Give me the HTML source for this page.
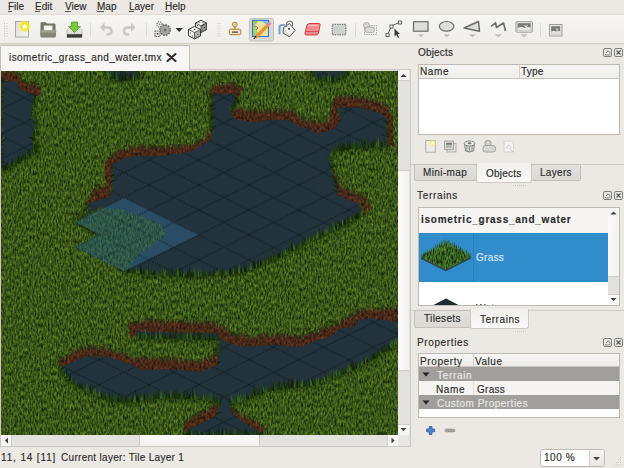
<!DOCTYPE html>
<html><head><meta charset="utf-8">
<style>
*{margin:0;padding:0;box-sizing:border-box}
html,body{width:624px;height:468px;overflow:hidden;background:#ece9e4;font-family:"Liberation Sans",sans-serif;font-size:10px;color:#2b2b2b}
.a{position:absolute}
.t{position:absolute;white-space:nowrap;line-height:10px;-webkit-text-stroke:0.15px currentColor}
.tab{position:absolute;background:linear-gradient(#e3e1dd,#dcd9d4);border:1px solid #c5c1ba;border-radius:2px}
.tsel{position:absolute;background:linear-gradient(#f1f0ed,#faf9f7);border:1px solid #cdc9c2;border-top:none;border-radius:0 0 3px 3px}
.tabs{position:absolute;background:#f5f4f2;border:1px solid #c2beb7;border-bottom:none;border-radius:2px 2px 0 0}
.grip{position:absolute;width:3px;background-image:radial-gradient(circle,#b9b5ae 0.7px,transparent 0.8px);background-size:2px 2px}
.sep{position:absolute;width:1px;height:14px;background:#d9d6d0;top:23px}
</style></head><body>
<!-- menu bar -->
<div class="t" style="left:8px;top:2px">File</div>
<div class="t" style="left:35px;top:2px">Edit</div>
<div class="t" style="left:65px;top:2px">View</div>
<div class="t" style="left:97px;top:2px">Map</div>
<div class="t" style="left:129px;top:2px">Layer</div>
<div class="t" style="left:165px;top:2px">Help</div>
<div class="a" style="left:8px;top:11px;width:4px;height:1px;background:#555"></div>
<div class="a" style="left:35px;top:11px;width:5px;height:1px;background:#555"></div>
<div class="a" style="left:65px;top:11px;width:6px;height:1px;background:#555"></div>
<div class="a" style="left:97px;top:11px;width:7px;height:1px;background:#555"></div>
<div class="a" style="left:129px;top:11px;width:5px;height:1px;background:#555"></div>
<div class="a" style="left:165px;top:11px;width:6px;height:1px;background:#555"></div>
<div class="a" style="left:0;top:14px;width:624px;height:1px;background:#dedbd6"></div>
<!-- toolbar -->
<div class="a" style="left:0;top:15px;width:624px;height:28px;background:linear-gradient(#f8f6f3,#efedea)"></div>
<div class="a" style="left:0;top:43px;width:624px;height:1px;background:#d2cec8"></div>
<div class="a" style="left:0;top:44px;width:624px;height:1px;background:#dfdcd6"></div>
<svg class="a" style="left:0;top:15px" width="624" height="28" viewBox="0 15 624 28">
<defs>
<radialGradient id="glow"><stop offset="0.55" stop-color="#f2e61e"/><stop offset="1" stop-color="#fff6a0" stop-opacity="0"/></radialGradient>
<linearGradient id="pg" x1="0" y1="0" x2="1" y2="1"><stop offset="0" stop-color="#dcdcd8"/><stop offset="1" stop-color="#f6f6f4"/></linearGradient>
<linearGradient id="drv" x1="0" y1="0" x2="0" y2="1"><stop offset="0" stop-color="#f2f2f0"/><stop offset="1" stop-color="#c9cac6"/></linearGradient>
<linearGradient id="fold" x1="0" y1="0" x2="0" y2="1"><stop offset="0" stop-color="#a6a795"/><stop offset="1" stop-color="#7a7b6b"/></linearGradient>
</defs>
<!-- grip -->
<g fill="#c4c0b9">
<rect x="4" y="23" width="1" height="1"/><rect x="6.5" y="23" width="1" height="1"/>
<rect x="4" y="25.5" width="1" height="1"/><rect x="6.5" y="25.5" width="1" height="1"/>
<rect x="4" y="28" width="1" height="1"/><rect x="6.5" y="28" width="1" height="1"/>
<rect x="4" y="30.5" width="1" height="1"/><rect x="6.5" y="30.5" width="1" height="1"/>
<rect x="4" y="33" width="1" height="1"/><rect x="6.5" y="33" width="1" height="1"/>
<rect x="4" y="35.5" width="1" height="1"/><rect x="6.5" y="35.5" width="1" height="1"/>
</g>
<!-- new -->
<rect x="15.5" y="21.5" width="13" height="15.5" fill="url(#pg)" stroke="#a8a8a4" stroke-width="1"/>
<circle cx="24.7" cy="26.3" r="6.8" fill="url(#glow)"/>
<path d="M24.7,23.3 L25.7,25.4 L27.9,25.6 L26.2,27.1 L26.8,29.3 L24.7,28.1 L22.6,29.3 L23.2,27.1 L21.5,25.6 L23.7,25.4 Z" fill="#fff"/>
<!-- open -->
<path d="M40.5,23.5 Q40.5,22.3 41.7,22.3 L46,22.3 L47,23.5 L54.5,23.5 Q55.5,23.5 55.5,24.5 L55.5,31 L40.5,31 Z" fill="#727466"/>
<rect x="43.8" y="25.3" width="9" height="5.5" fill="#f4f4f0" stroke="#8d8e80" stroke-width="0.6"/>
<path d="M40,30.3 L56.3,30.3 L55.8,36.4 Q55.7,37.4 54.7,37.4 L41.5,37.4 Q40.5,37.4 40.4,36.4 Z" fill="url(#fold)"/>
<path d="M40.3,33.8 L56,33.8" stroke="#6b6c5e" stroke-width="0.6"/>
<!-- save -->
<path d="M67,30 L69,27.5 L80,27.5 L82,30 L82,37.5 L67,37.5 Z" fill="url(#drv)" stroke="#9a9b97" stroke-width="0.6"/>
<rect x="67" y="34.2" width="15" height="3.3" fill="#3a3b3a"/>
<path d="M71.5,22 L77.5,22 L77.5,26.5 L80.5,26.5 L74.5,32.5 L68.5,26.5 L71.5,26.5 Z" fill="#74c93c" stroke="#4e9a24" stroke-width="0.7"/>
<!-- sep -->
<rect x="90" y="23" width="1" height="14" fill="#dcd9d3"/>
<!-- undo/redo disabled -->
<g fill="none" stroke="#c9c8c4" stroke-width="2.6" stroke-linecap="round">
<path d="M102.5,27.5 L108,27.5 Q111.5,27.5 111.5,31 Q111.5,34.5 107.5,34.5"/>
<path d="M133,27.5 L127.5,27.5 Q124,27.5 124,31 Q124,34.5 128,34.5"/>
</g>
<path d="M104.5,22.5 L100,27.5 L104.5,32 Z" fill="#c9c8c4"/>
<path d="M131,22.5 L135.5,27.5 L131,32 Z" fill="#c9c8c4"/>
<rect x="146" y="23" width="1" height="14" fill="#dcd9d3"/>
<!-- gears -->
<circle cx="165" cy="30" r="5.2" fill="#9c9c99" stroke="#6a6a67" stroke-width="1.6" stroke-dasharray="1.6,1.1"/>
<circle cx="165" cy="30" r="4" fill="#a7a7a4"/>
<circle cx="165" cy="30" r="1.5" fill="#6d6d6a"/>
<circle cx="159.5" cy="24.3" r="2.6" fill="#f0f0ee" stroke="#777774" stroke-width="1.3" stroke-dasharray="1.2,0.9"/>
<circle cx="159.5" cy="24.3" r="0.9" fill="#888"/>
<rect x="155" y="31" width="5" height="5.5" fill="#e6e6e4" stroke="#6a6a67" stroke-width="1.1" stroke-dasharray="1.5,0.7"/>
<rect x="156.8" y="33" width="1.5" height="1.6" fill="#444"/>
<path d="M175.5,28 L182.8,28 L179.2,32 Z" fill="#2e2e2e"/>
<!-- dice -->
<path d="M195.5,23 L201,20.2 L206.5,23 L206.5,29.5 L201,32.5 L195.5,29.5 Z" fill="#ececea" stroke="#2f2f2f" stroke-width="0.9" stroke-linejoin="round"/>
<path d="M201,26 L206.5,23 L206.5,29.5 L201,32.5 Z" fill="#8e8e8c" stroke="#2f2f2f" stroke-width="0.7"/>
<path d="M195.5,23 L201,26 L206.5,23" fill="none" stroke="#2f2f2f" stroke-width="0.7"/>
<path d="M188.5,29.5 L194.5,26.3 L200.5,29.5 L200.5,35.8 L194.5,38.8 L188.5,35.8 Z" fill="#f6f6f4" stroke="#2a2a2a" stroke-width="0.95" stroke-linejoin="round"/>
<path d="M194.5,32.6 L200.5,29.5 L200.5,35.8 L194.5,38.8 Z" fill="#b2b2b0" stroke="#2a2a2a" stroke-width="0.7"/>
<path d="M188.5,29.5 L194.5,32.6" fill="none" stroke="#2a2a2a" stroke-width="0.7"/>
<g fill="#2a2a2a"><ellipse cx="194.5" cy="29.5" rx="0.9" ry="0.6"/><circle cx="190.5" cy="33" r="0.55"/><circle cx="192.5" cy="36" r="0.55"/><circle cx="199.2" cy="22.3" r="0.55"/><circle cx="203" cy="22.6" r="0.55"/><circle cx="197.5" cy="25.6" r="0.55"/><circle cx="204.5" cy="27.5" r="0.5"/><circle cx="197.8" cy="34.5" r="0.5"/></g>
<!-- grip 2 -->
<g fill="#d0ccc5">
<rect x="217.5" y="23" width="1" height="1"/><rect x="219.5" y="23" width="1" height="1"/>
<rect x="217.5" y="25.5" width="1" height="1"/><rect x="219.5" y="25.5" width="1" height="1"/>
<rect x="217.5" y="28" width="1" height="1"/><rect x="219.5" y="28" width="1" height="1"/>
<rect x="217.5" y="30.5" width="1" height="1"/><rect x="219.5" y="30.5" width="1" height="1"/>
<rect x="217.5" y="33" width="1" height="1"/><rect x="219.5" y="33" width="1" height="1"/>
<rect x="217.5" y="35.5" width="1" height="1"/><rect x="219.5" y="35.5" width="1" height="1"/>
</g>
<!-- stamp -->
<circle cx="234.8" cy="24.5" r="2.4" fill="#e6cf9a" stroke="#a87b30" stroke-width="0.9"/>
<rect x="233.8" y="26.5" width="2" height="3" fill="#c89a48"/>
<rect x="229.3" y="29.2" width="11.5" height="5.5" rx="1.2" fill="#f1e6c6" stroke="#a87b30" stroke-width="1"/>
<rect x="232" y="31.5" width="6" height="1.2" fill="#3a3a3a"/>
<!-- terrain brush (selected) -->
<rect x="249.5" y="18.5" width="24" height="22.5" rx="2" fill="#dddad5" stroke="#c3bfb8" stroke-width="1"/>
<rect x="252.5" y="20.5" width="16" height="16" fill="#a6d36a" stroke="#2d7bd0" stroke-width="1.2"/>
<path d="M253,21 L263,21 L268,27 L268,36 L259,36 Z" fill="#f1e4a8" opacity="0.9"/>
<path d="M253,21 L258,21 L253,28 Z" fill="#9bc85a"/>
<path d="M262,21 L268,21 L268,26 Z" fill="#6fc4e8"/>
<path d="M255,26 L258,28 L256,30" stroke="#d04030" stroke-width="0.9" fill="none"/>
<path d="M255.5,37.5 L268.5,24.5" stroke="#e8962a" stroke-width="3.2"/>
<path d="M268,25 L270.5,22.5" stroke="#e08ab8" stroke-width="3.2"/>
<path d="M254,39 L256,36" stroke="#333" stroke-width="1.3"/>
<!-- bucket -->
<path d="M279.5,33.5 L279.5,27.5 Q279.5,25 282,25 L284,25" stroke="#7f9fd6" stroke-width="2.2" fill="none" stroke-linecap="round"/>
<path d="M283.5,27.5 L289.5,23.5 L295.2,30.5 L289.5,36.8 L283,33.2 Z" fill="#d9d9d7" stroke="#5f5f5d" stroke-width="1" stroke-linejoin="round"/>
<path d="M284.5,28.5 L289.5,25 L293.5,30.5 L289,35 Z" fill="#f2f2f0"/>
<path d="M286.3,27 Q286,21 290,21 Q293.5,21.3 292.3,26.5" stroke="#6e6e6c" stroke-width="1.1" fill="none"/>
<circle cx="289" cy="28.8" r="1.1" fill="#4a4a4a"/>
<!-- eraser -->
<path d="M307,25 Q308,23.5 310,23.5 L319,23.5 Q320.8,23.7 320,25.5 L318.5,33 Q318,35 316,35 L306.5,35 Q304.5,35 305,33 Z" fill="#ee8d8f" stroke="#e0393f" stroke-width="1"/>
<path d="M305.5,31.5 L318.5,31.5" stroke="#e0393f" stroke-width="0.8"/>
<path d="M308,25.5 L318,25.5" stroke="#f6c0c0" stroke-width="1.2"/>
<!-- rect select -->
<rect x="332.3" y="24.3" width="13.5" height="10.5" fill="#cdd2cb" stroke="#585858" stroke-width="0.9" stroke-dasharray="1.4,1"/>
<rect x="355" y="23" width="1" height="14" fill="#dcd9d3"/>
<!-- select objects -->
<rect x="364.5" y="25.5" width="12" height="9" fill="none" stroke="#9a9a96" stroke-width="0.9" stroke-dasharray="1.3,1"/>
<circle cx="366.5" cy="25.5" r="3" fill="#d6d6d2" stroke="#a4a4a0" stroke-width="0.8"/>
<rect x="365" y="27" width="9.5" height="5.5" rx="2.5" fill="#d9d9d5" stroke="#a4a4a0" stroke-width="0.8"/>
<!-- edit polygons -->
<path d="M387.5,35 L391.5,26 L399,22.5" stroke="#555" stroke-width="1" fill="none"/>
<rect x="386" y="33.5" width="3" height="3" fill="#fff" stroke="#555" stroke-width="0.9"/>
<rect x="390" y="25" width="3" height="3" fill="#fff" stroke="#555" stroke-width="0.9"/>
<rect x="398.5" y="21" width="3" height="3" fill="#fff" stroke="#555" stroke-width="0.9"/>
<path d="M394.5,28.5 L394.5,36.5 L396.3,34.8 L398,38 L399.3,37.3 L397.6,34.2 L400,34 Z" fill="#3a3a3a"/>
<!-- insert rect -->
<rect x="413.5" y="21.7" width="14.5" height="9.5" fill="#dededb" stroke="#6b6b69" stroke-width="1.2"/>
<!-- ellipse -->
<ellipse cx="446.6" cy="26.3" rx="7.3" ry="4.8" fill="#dededb" stroke="#6b6b69" stroke-width="1.2"/>
<!-- polygon -->
<path d="M464,28 L478.5,21.5 L479.5,31.2 Z" fill="#dededb" stroke="#6b6b69" stroke-width="1.5" stroke-linejoin="round"/>
<!-- polyline -->
<path d="M491,26.5 L495.5,22.8 L496.5,27.5 L503.5,23 L505.5,31" fill="none" stroke="#6b6b69" stroke-width="1.6" stroke-linejoin="round"/>
<!-- insert tile -->
<rect x="515.9" y="21.7" width="16.5" height="10.5" rx="1" fill="#e8e8e6" stroke="#9a9a97" stroke-width="1"/>
<rect x="517.5" y="23.2" width="13.2" height="7.5" fill="#7a7a78"/>
<path d="M517.5,28 Q522,26 525,28 Q528,26.5 530.7,27.5 L530.7,30.7 L517.5,30.7 Z" fill="#e6e6e4"/>
<path d="M526,25 L526,30 M524,25.3 L526,27 L528,25.3" stroke="#eee" stroke-width="0.8" fill="none"/>
<!-- dropdown arrows -->
<g fill="#c2c1bd">
<path d="M418,34.3 L424,34.3 L421,37.6 Z"/>
<path d="M443.5,34.3 L450,34.3 L446.75,37.6 Z"/>
<path d="M468.7,34.3 L476,34.3 L472.3,37.6 Z"/>
<path d="M494.6,34.3 L502,34.3 L498.3,37.6 Z"/>
<path d="M520.4,34.3 L527.6,34.3 L524,37.6 Z"/>
</g>
<rect x="540" y="23" width="1" height="14" fill="#dcd9d3"/>
<!-- image icon -->
<rect x="549.5" y="24.5" width="12.5" height="11.5" fill="#e8e8e6" stroke="#a09f9b" stroke-width="1"/>
<rect x="551.2" y="26.2" width="9" height="8" fill="#777775"/>
<path d="M551.2,31.5 Q554,30 556,31.5 Q558,30.5 560.2,31 L560.2,34.2 L551.2,34.2 Z" fill="#e0e0de"/>
<path d="M557,28 L557,33 M555.5,28.5 L557,30 L558.5,28.5" stroke="#ddd" stroke-width="0.7" fill="none"/>
</svg>

<!-- tab bar -->
<div class="tabs" style="left:0;top:45px;width:190px;height:25px;background:#f7f6f4"></div>
<div class="t" style="left:9px;top:53px;letter-spacing:0.42px">isometric_grass_and_water.tmx</div>
<svg class="a" style="left:166px;top:53px" width="11" height="9" viewBox="0 0 11 9"><path d="M1.5,1 L9.5,8 M9.5,1 L1.5,8" stroke="#2a2a2a" stroke-width="2" stroke-linecap="round"/></svg>
<!-- map frame -->
<div class="a" style="left:0;top:69px;width:411px;height:378px;border:1px solid #cdc9c2;background:#e3e1dd"></div>
<div class="a" style="left:1px;top:69px;width:188px;height:2px;background:#f7f6f4"></div>
<svg class="a" style="left:1px;top:71px" width="397" height="364" viewBox="1 71 397 364">
<defs>
<filter id="gr" x="0" y="0" width="100%" height="100%" color-interpolation-filters="sRGB">
<feTurbulence type="fractalNoise" baseFrequency="0.6 0.25" numOctaves="3" seed="5" result="n"/>
<feColorMatrix in="n" type="matrix" values="0.45 0 0 0 0.004  0.6 0 0 0 0.037  0.17 0 0 0 0.012  0 0 0 0 1"/>
</filter>
<filter id="di" x="0" y="0" width="100%" height="100%" color-interpolation-filters="sRGB">
<feTurbulence type="fractalNoise" baseFrequency="0.5 0.3" numOctaves="2" seed="11" result="n"/>
<feColorMatrix in="n" type="matrix" values="0.42 0 0 0 0.072  0.24 0 0 0 0.037  0.12 0 0 0 0.034  0 0 0 0 1" result="c"/>
<feComposite in="c" in2="SourceAlpha" operator="in"/>
</filter>
<filter id="wa" x="0" y="0" width="100%" height="100%" color-interpolation-filters="sRGB">
<feTurbulence type="fractalNoise" baseFrequency="0.25" numOctaves="2" seed="2" result="n"/>
<feColorMatrix in="n" type="matrix" values="0.12 0 0 0 0.06  0.14 0 0 0 0.105  0.16 0 0 0 0.135  0 0 0 0 1" result="c"/>
<feComposite in="c" in2="SourceAlpha" operator="in"/>
</filter>
<filter id="jag" x="-5%" y="-5%" width="110%" height="110%">
<feTurbulence type="fractalNoise" baseFrequency="0.7 0.04" numOctaves="2" seed="9" result="t"/>
<feDisplacementMap in="SourceGraphic" in2="t" scale="11" xChannelSelector="B" yChannelSelector="R"/>
</filter>
<mask id="land" maskUnits="userSpaceOnUse" x="1" y="71" width="397" height="364"><rect x="1" y="71" width="397" height="364" fill="#fff"/><g fill="#000" filter="url(#jag)"><g stroke="#000" stroke-width="4" stroke-linejoin="round"><polygon points="1,71 12,71 18,74 21,81 26,83 36,84 39,88 38.5,94 35,94 22.5,91 15,81 1,81"/><polygon points="107,192 107,160 120,150 140,146 156,147.5 191,145 206,137.5 212,128 212,140 188.5,152.5 156,156 137.5,156 125,157.5 112.5,165 112,192"/><polygon points="210,88 220,84 235,84 241,88 238,95 212,95"/><polygon points="231,107.5 256,111 291,110 301,117.5 312,122.5 329.5,120 332,105 337,96 362,97.5 384.5,104 392,115 392,145 387,145 387,120 382,114 359.5,107.5 338,107.5 340.75,120 334.5,129 317,134 312,130 298.5,126 288.5,120 268.5,120 256,122.5 238.5,120 232,117"/><polygon points="85,204 95,190 110,183 112,191 109,197 88,203.6"/><polygon points="332,170 337,180 342,187 364.5,197 369.5,207 362,214.5 359.5,204.5 337,194.5 337,187"/><polygon points="131,324 146,320 211,323 221,326.5 233.5,335 253.5,336.5 277,334 292,335 300,337.5 332,326 348,316.6 364,309.4 398,308.6 398,322.4 386.5,320 372,318.4 359.3,319.2 354.5,326.4 338.5,329 332,336 312.8,341.7 300,347 279.5,345 241,346.5 223.5,341.5 216,333 183.5,333 137,331.5 131,336"/><polygon points="60,361.5 72.5,351.5 87.5,346.5 105,348 121,354 136,357 171,359 203.5,361 218.5,352 218.5,364 203.5,371.5 171,369.5 141,370 130,364 107.5,356.5 85,356.5 62.5,366.5"/><polygon points="185,422 200,413 214,406 220,403 217.6,415 208,420.6 189.4,428.5 186,431"/><polygon points="231,408 240,414 252,420 263,426 264,434 262,433 251,427.6 244,422.3 231,412.6"/></g><polygon points="1,81 15,81 22.5,91 35,94 33,105 31,114 36,125 32.5,140 37.5,150 20,160 7.5,167.5 1,170"/><polygon points="105,71 140,71 140,73 135,79 118,79 110,76"/><polygon points="312,71 347,71 345,76 335,80 320,80 314,76"/><polygon points="212,94 236,94 236,102 230,110 232,117 238.5,120 256,122.5 268.5,120 288.5,120 298.5,126 312,130 317,134 334.5,129 340.75,120 338,107.5 359.5,107.5 382,114 387,120 387,145 352,147.5 334.5,150 329.5,157.5 332,170 337,187 337,194.5 359.5,204.5 362,214.5 342,224.5 317,237 292,249.5 267,262 242,272 211,274.5 186,276 148.5,273 123.5,270.5 99,235 76,221 88,211.7 88,203.6 109,197 112,191 112.5,165 125,157.5 137.5,156 156,156 188.5,152.5 211,140 212,130"/><polygon points="137,331.5 183.5,333 216,333 223.5,341.5 241,346.5 279.5,345 300,347 312.8,341.7 332,336 338.5,329 354.5,326.4 359.3,319.2 372,318.4 386.5,320 398,322.4 398,341.5 367,361.5 342,373 317,384 292,386.5 267,390 256,394 243.5,400 230,402 231,412.6 244,422.3 251,427.6 262,433 264,436 187,436 189.4,428.5 208,420.6 217.6,415 220,403 213.5,400 183.5,396.5 146,398 130,401.5 110,400 95,394 75,384 62.5,372.75 62.5,366.5 85,356.5 107.5,356.5 130,364 141,370 171,369.5 203.5,371.5 218.5,364 218.5,339 190,338 150,337 137,338"/></g></mask>
<filter id="bl" x="-10%" y="-10%" width="120%" height="120%"><feGaussianBlur stdDeviation="1.6"/></filter>
<pattern id="grid" x="99.04" y="197.5" width="49.92" height="24.96" patternUnits="userSpaceOnUse">
<path d="M0,12.48 L24.96,0 L49.92,12.48 L24.96,24.96 Z" fill="none" stroke="#0a0f13" stroke-width="1" stroke-dasharray="1.2,1.4"/>
</pattern>
</defs>
<rect x="1" y="71" width="397" height="364" fill="#3c641e" filter="url(#gr)"/>
<g fill="#4a2a18" stroke="#4a2a18" stroke-width="4" stroke-linejoin="round" filter="url(#di)"><polygon points="1,71 12,71 18,74 21,81 26,83 36,84 39,88 38.5,94 35,94 22.5,91 15,81 1,81"/><polygon points="107,192 107,160 120,150 140,146 156,147.5 191,145 206,137.5 212,128 212,140 188.5,152.5 156,156 137.5,156 125,157.5 112.5,165 112,192"/><polygon points="210,88 220,84 235,84 241,88 238,95 212,95"/><polygon points="231,107.5 256,111 291,110 301,117.5 312,122.5 329.5,120 332,105 337,96 362,97.5 384.5,104 392,115 392,145 387,145 387,120 382,114 359.5,107.5 338,107.5 340.75,120 334.5,129 317,134 312,130 298.5,126 288.5,120 268.5,120 256,122.5 238.5,120 232,117"/><polygon points="85,204 95,190 110,183 112,191 109,197 88,203.6"/><polygon points="332,170 337,180 342,187 364.5,197 369.5,207 362,214.5 359.5,204.5 337,194.5 337,187"/><polygon points="131,324 146,320 211,323 221,326.5 233.5,335 253.5,336.5 277,334 292,335 300,337.5 332,326 348,316.6 364,309.4 398,308.6 398,322.4 386.5,320 372,318.4 359.3,319.2 354.5,326.4 338.5,329 332,336 312.8,341.7 300,347 279.5,345 241,346.5 223.5,341.5 216,333 183.5,333 137,331.5 131,336"/><polygon points="60,361.5 72.5,351.5 87.5,346.5 105,348 121,354 136,357 171,359 203.5,361 218.5,352 218.5,364 203.5,371.5 171,369.5 141,370 130,364 107.5,356.5 85,356.5 62.5,366.5"/><polygon points="185,422 200,413 214,406 220,403 217.6,415 208,420.6 189.4,428.5 186,431"/><polygon points="231,408 240,414 252,420 263,426 264,434 262,433 251,427.6 244,422.3 231,412.6"/></g>
<g fill="#22333d"><polygon points="1,81 15,81 22.5,91 35,94 33,105 31,114 36,125 32.5,140 37.5,150 20,160 7.5,167.5 1,170"/><polygon points="105,71 140,71 140,73 135,79 118,79 110,76"/><polygon points="312,71 347,71 345,76 335,80 320,80 314,76"/><polygon points="212,94 236,94 236,102 230,110 232,117 238.5,120 256,122.5 268.5,120 288.5,120 298.5,126 312,130 317,134 334.5,129 340.75,120 338,107.5 359.5,107.5 382,114 387,120 387,145 352,147.5 334.5,150 329.5,157.5 332,170 337,187 337,194.5 359.5,204.5 362,214.5 342,224.5 317,237 292,249.5 267,262 242,272 211,274.5 186,276 148.5,273 123.5,270.5 99,235 76,221 88,211.7 88,203.6 109,197 112,191 112.5,165 125,157.5 137.5,156 156,156 188.5,152.5 211,140 212,130"/><polygon points="137,331.5 183.5,333 216,333 223.5,341.5 241,346.5 279.5,345 300,347 312.8,341.7 332,336 338.5,329 354.5,326.4 359.3,319.2 372,318.4 386.5,320 398,322.4 398,341.5 367,361.5 342,373 317,384 292,386.5 267,390 256,394 243.5,400 230,402 231,412.6 244,422.3 251,427.6 262,433 264,436 187,436 189.4,428.5 208,420.6 217.6,415 220,403 213.5,400 183.5,396.5 146,398 130,401.5 110,400 95,394 75,384 62.5,372.75 62.5,366.5 85,356.5 107.5,356.5 130,364 141,370 171,369.5 203.5,371.5 218.5,364 218.5,339 190,338 150,337 137,338"/></g>
<g fill="url(#grid)"><polygon points="1,81 15,81 22.5,91 35,94 33,105 31,114 36,125 32.5,140 37.5,150 20,160 7.5,167.5 1,170"/><polygon points="105,71 140,71 140,73 135,79 118,79 110,76"/><polygon points="312,71 347,71 345,76 335,80 320,80 314,76"/><polygon points="212,94 236,94 236,102 230,110 232,117 238.5,120 256,122.5 268.5,120 288.5,120 298.5,126 312,130 317,134 334.5,129 340.75,120 338,107.5 359.5,107.5 382,114 387,120 387,145 352,147.5 334.5,150 329.5,157.5 332,170 337,187 337,194.5 359.5,204.5 362,214.5 342,224.5 317,237 292,249.5 267,262 242,272 211,274.5 186,276 148.5,273 123.5,270.5 99,235 76,221 88,211.7 88,203.6 109,197 112,191 112.5,165 125,157.5 137.5,156 156,156 188.5,152.5 211,140 212,130"/><polygon points="137,331.5 183.5,333 216,333 223.5,341.5 241,346.5 279.5,345 300,347 312.8,341.7 332,336 338.5,329 354.5,326.4 359.3,319.2 372,318.4 386.5,320 398,322.4 398,341.5 367,361.5 342,373 317,384 292,386.5 267,390 256,394 243.5,400 230,402 231,412.6 244,422.3 251,427.6 262,433 264,436 187,436 189.4,428.5 208,420.6 217.6,415 220,403 213.5,400 183.5,396.5 146,398 130,401.5 110,400 95,394 75,384 62.5,372.75 62.5,366.5 85,356.5 107.5,356.5 130,364 141,370 171,369.5 203.5,371.5 218.5,364 218.5,339 190,338 150,337 137,338"/></g>
<rect x="1" y="71" width="397" height="364" fill="#3c641e" filter="url(#gr)" mask="url(#land)"/>
<g mask="url(#land)"><g fill="none" stroke="#10200a" stroke-width="6" stroke-opacity="0.55" filter="url(#bl)"><polygon points="1,81 15,81 22.5,91 35,94 33,105 31,114 36,125 32.5,140 37.5,150 20,160 7.5,167.5 1,170"/><polygon points="105,71 140,71 140,73 135,79 118,79 110,76"/><polygon points="312,71 347,71 345,76 335,80 320,80 314,76"/><polygon points="212,94 236,94 236,102 230,110 232,117 238.5,120 256,122.5 268.5,120 288.5,120 298.5,126 312,130 317,134 334.5,129 340.75,120 338,107.5 359.5,107.5 382,114 387,120 387,145 352,147.5 334.5,150 329.5,157.5 332,170 337,187 337,194.5 359.5,204.5 362,214.5 342,224.5 317,237 292,249.5 267,262 242,272 211,274.5 186,276 148.5,273 123.5,270.5 99,235 76,221 88,211.7 88,203.6 109,197 112,191 112.5,165 125,157.5 137.5,156 156,156 188.5,152.5 211,140 212,130"/><polygon points="137,331.5 183.5,333 216,333 223.5,341.5 241,346.5 279.5,345 300,347 312.8,341.7 332,336 338.5,329 354.5,326.4 359.3,319.2 372,318.4 386.5,320 398,322.4 398,341.5 367,361.5 342,373 317,384 292,386.5 267,390 256,394 243.5,400 230,402 231,412.6 244,422.3 251,427.6 262,433 264,436 187,436 189.4,428.5 208,420.6 217.6,415 220,403 213.5,400 183.5,396.5 146,398 130,401.5 110,400 95,394 75,384 62.5,372.75 62.5,366.5 85,356.5 107.5,356.5 130,364 141,370 171,369.5 203.5,371.5 218.5,364 218.5,339 190,338 150,337 137,338"/></g></g>
<g><path d="M36.2,94.8L31.3,92.5L36.2,96.0Z" fill="#10200a"/><path d="M35.8,96.6L31.6,94.0L35.8,98.8Z" fill="#10200a"/><path d="M35.6,97.9L29.6,94.4L35.6,99.3Z" fill="#2a4c1c"/><path d="M35.1,100.7L30.2,96.0L35.1,102.4Z" fill="#15290c"/><path d="M34.6,103.5L30.1,98.5L34.6,105.1Z" fill="#1c3612"/><path d="M34.4,104.4L29.3,101.9L34.4,106.1Z" fill="#1c3612"/><path d="M33.6,108.0L27.8,103.2L33.6,110.1Z" fill="#22401a"/><path d="M33.4,108.9L27.4,104.1L33.4,110.5Z" fill="#1c3612"/><path d="M32.7,112.0L28.6,110.1L32.7,114.1Z" fill="#1c3612"/><path d="M33.4,115.1L26.9,112.6L33.4,117.3Z" fill="#22401a"/><path d="M34.0,116.8L29.2,114.8L34.0,118.4Z" fill="#1c3612"/><path d="M35.1,118.9L31.2,115.4L35.1,121.0Z" fill="#2a4c1c"/><path d="M36.1,121.5L31.2,116.2L36.1,122.9Z" fill="#2a4c1c"/><path d="M36.6,122.5L30.5,121.1L36.6,124.1Z" fill="#10200a"/><path d="M37.1,125.9L32.9,121.1L37.1,127.6Z" fill="#2a4c1c"/><path d="M36.5,128.2L30.4,125.4L36.5,129.8Z" fill="#22401a"/><path d="M36.4,128.9L30.0,125.4L36.4,130.3Z" fill="#2a4c1c"/><path d="M35.7,131.4L30.6,126.4L35.7,133.3Z" fill="#15290c"/><path d="M35.2,134.0L31.2,132.2L35.2,135.3Z" fill="#15290c"/><path d="M34.6,136.6L30.5,133.9L34.6,138.3Z" fill="#22401a"/><path d="M34.2,137.8L27.4,136.9L34.2,140.2Z" fill="#10200a"/><path d="M34.5,140.4L30.1,136.8L34.5,142.3Z" fill="#10200a"/><path d="M35.1,141.9L31.5,137.7L35.1,143.3Z" fill="#1c3612"/><path d="M36.8,144.9L31.6,143.5L36.8,147.0Z" fill="#1c3612"/><path d="M37.7,146.8L33.5,144.2L37.7,148.6Z" fill="#15290c"/><path d="M38.4,148.0L33.1,147.1L38.4,150.1Z" fill="#1c3612"/><path d="M35.8,151.8L38.4,147.0L38.0,151.8Z" fill="#3a6420"/><path d="M34.5,152.4L37.3,147.9L37.5,152.4Z" fill="#10200a"/><path d="M32.7,153.3L34.4,144.3L35.9,153.3Z" fill="#15290c"/><path d="M32.6,153.6L33.1,146.6L35.1,153.6Z" fill="#3a6420"/><path d="M30.6,154.6L32.9,144.6L33.7,154.6Z" fill="#1a3310"/><path d="M29.8,155.0L31.9,149.0L33.0,155.0Z" fill="#22401a"/><path d="M28.5,156.1L28.1,149.3L30.4,156.1Z" fill="#10200a"/><path d="M27.7,156.6L27.4,151.1L29.6,156.6Z" fill="#1a3310"/><path d="M27.3,156.9L27.6,152.4L28.9,156.9Z" fill="#2a4c1c"/><path d="M25.8,157.7L25.6,149.5L27.7,157.7Z" fill="#2a4c1c"/><path d="M24.0,158.6L24.9,153.0L26.3,158.6Z" fill="#10200a"/><path d="M23.4,158.9L24.5,152.2L25.7,158.9Z" fill="#1a3310"/><path d="M22.1,159.5L22.1,151.5L24.8,159.5Z" fill="#1a3310"/><path d="M20.9,160.4L21.0,151.1L22.9,160.4Z" fill="#22401a"/><path d="M19.8,160.9L22.1,155.7L22.2,160.9Z" fill="#10200a"/><path d="M18.3,161.8L18.1,152.6L20.7,161.8Z" fill="#2a4c1c"/><path d="M16.4,162.8L19.0,152.9L19.5,162.8Z" fill="#15290c"/><path d="M15.8,163.1L18.5,156.2L18.8,163.1Z" fill="#15290c"/><path d="M15.1,163.8L17.0,153.8L17.2,163.8Z" fill="#22401a"/><path d="M13.7,164.4L16.0,156.2L16.5,164.4Z" fill="#1a3310"/><path d="M12.5,165.4L14.9,160.4L14.5,165.4Z" fill="#2a4c1c"/><path d="M11.3,166.1L11.0,161.7L13.4,166.1Z" fill="#22401a"/><path d="M10.5,166.6L12.9,157.4L12.4,166.6Z" fill="#10200a"/><path d="M9.1,167.5L11.0,163.1L10.8,167.5Z" fill="#22401a"/><path d="M8.6,167.7L9.9,158.3L10.6,167.7Z" fill="#2a4c1c"/><path d="M7.3,168.4L8.0,160.4L9.8,168.4Z" fill="#1c3612"/><path d="M6.2,169.1L6.9,160.1L8.2,169.1Z" fill="#1a3310"/><path d="M3.8,169.8L6.7,162.5L6.9,169.8Z" fill="#10200a"/><path d="M2.7,170.2L3.0,159.4L5.9,170.2Z" fill="#15290c"/><path d="M1.9,170.8L1.6,165.6L4.0,170.8Z" fill="#15290c"/><path d="M0.4,171.2L2.4,165.9L3.3,171.2Z" fill="#2a4c1c"/><path d="M-0.5,166.7L5.4,163.1L-0.5,168.9Z" fill="#2a4c1c"/><path d="M-0.5,166.1L6.8,164.6L-0.5,168.1Z" fill="#10200a"/><path d="M-0.5,162.5L4.0,160.4L-0.5,164.6Z" fill="#15290c"/><path d="M-0.5,161.0L5.7,158.7L-0.5,162.5Z" fill="#22401a"/><path d="M-0.5,159.4L3.7,156.0L-0.5,161.7Z" fill="#1c3612"/><path d="M-0.5,158.0L4.0,152.9L-0.5,159.6Z" fill="#15290c"/><path d="M-0.5,154.1L5.0,153.0L-0.5,155.9Z" fill="#10200a"/><path d="M-0.5,151.3L4.0,150.2L-0.5,153.3Z" fill="#1c3612"/><path d="M-0.5,150.2L3.9,147.7L-0.5,151.6Z" fill="#10200a"/><path d="M-0.5,147.2L4.4,145.6L-0.5,148.7Z" fill="#2a4c1c"/><path d="M-0.5,144.9L5.7,143.2L-0.5,146.6Z" fill="#15290c"/><path d="M-0.5,142.4L6.3,138.1L-0.5,144.8Z" fill="#10200a"/><path d="M-0.5,141.7L6.2,139.3L-0.5,144.1Z" fill="#15290c"/><path d="M-0.5,139.4L3.9,135.0L-0.5,141.6Z" fill="#22401a"/><path d="M-0.5,137.3L5.1,135.1L-0.5,139.4Z" fill="#15290c"/><path d="M-0.5,135.1L4.9,133.0L-0.5,137.1Z" fill="#10200a"/><path d="M-0.5,131.5L5.7,128.6L-0.5,133.0Z" fill="#2a4c1c"/><path d="M-0.5,130.8L6.6,128.4L-0.5,132.1Z" fill="#2a4c1c"/><path d="M-0.5,127.0L3.9,124.1L-0.5,128.6Z" fill="#1c3612"/><path d="M-0.5,125.6L3.9,121.2L-0.5,127.9Z" fill="#15290c"/><path d="M-0.5,123.9L3.5,119.2L-0.5,126.0Z" fill="#2a4c1c"/><path d="M-0.5,120.6L6.1,119.0L-0.5,122.9Z" fill="#22401a"/><path d="M-0.5,119.9L4.7,117.6L-0.5,121.9Z" fill="#10200a"/><path d="M-0.5,116.4L4.6,113.6L-0.5,118.0Z" fill="#22401a"/><path d="M-0.5,114.1L4.2,110.4L-0.5,116.0Z" fill="#22401a"/><path d="M-0.5,111.7L5.7,109.7L-0.5,114.0Z" fill="#2a4c1c"/><path d="M-0.5,109.5L4.2,105.2L-0.5,111.1Z" fill="#2a4c1c"/><path d="M-0.5,107.6L5.0,105.6L-0.5,109.3Z" fill="#22401a"/><path d="M-0.5,104.8L6.1,101.3L-0.5,107.1Z" fill="#1c3612"/><path d="M-0.5,103.3L4.7,99.1L-0.5,105.3Z" fill="#15290c"/><path d="M-0.5,101.0L4.2,99.7L-0.5,102.5Z" fill="#15290c"/><path d="M-0.5,97.9L6.2,95.0L-0.5,99.8Z" fill="#2a4c1c"/><path d="M-0.5,97.3L5.2,95.4L-0.5,99.4Z" fill="#10200a"/><path d="M-0.5,93.5L6.6,89.5L-0.5,95.7Z" fill="#15290c"/><path d="M-0.5,92.8L5.3,91.8L-0.5,95.1Z" fill="#15290c"/><path d="M-0.5,89.4L4.0,86.2L-0.5,90.8Z" fill="#2a4c1c"/><path d="M-0.5,86.7L6.8,82.1L-0.5,88.7Z" fill="#2a4c1c"/><path d="M-0.5,84.7L5.0,80.2L-0.5,87.0Z" fill="#22401a"/><path d="M-0.5,82.4L5.2,80.4L-0.5,84.5Z" fill="#15290c"/><path d="M-0.5,80.6L6.2,77.4L-0.5,82.1Z" fill="#15290c"/><path d="M138.7,74.8L139.1,71.0L140.8,74.8Z" fill="#1c3612"/><path d="M137.5,76.4L138.1,72.6L139.3,76.4Z" fill="#15290c"/><path d="M136.6,77.2L137.9,73.5L138.9,77.2Z" fill="#22401a"/><path d="M136.3,77.6L138.3,70.4L138.6,77.6Z" fill="#1a3310"/><path d="M135.4,78.5L136.6,71.2L137.9,78.5Z" fill="#1c3612"/><path d="M134.1,79.8L136.6,74.6L137.1,79.8Z" fill="#2a4c1c"/><path d="M132.7,80.5L133.2,72.2L135.3,80.5Z" fill="#15290c"/><path d="M132.2,80.5L133.8,72.6L134.4,80.5Z" fill="#3a6420"/><path d="M130.7,80.5L130.7,74.8L133.0,80.5Z" fill="#2a4c1c"/><path d="M129.1,80.5L130.9,69.7L131.7,80.5Z" fill="#10200a"/><path d="M127.8,80.5L127.6,75.1L130.1,80.5Z" fill="#22401a"/><path d="M127.0,80.5L129.2,72.8L129.1,80.5Z" fill="#1c3612"/><path d="M125.2,80.5L124.9,70.2L127.2,80.5Z" fill="#10200a"/><path d="M123.3,80.5L124.0,75.6L126.4,80.5Z" fill="#10200a"/><path d="M122.1,80.5L124.9,71.4L124.9,80.5Z" fill="#15290c"/><path d="M121.1,80.5L122.1,71.7L123.1,80.5Z" fill="#10200a"/><path d="M119.8,80.5L122.0,74.5L122.5,80.5Z" fill="#15290c"/><path d="M118.4,80.5L120.7,69.3L121.2,80.5Z" fill="#15290c"/><path d="M117.2,80.5L117.5,75.2L118.9,80.5Z" fill="#1a3310"/><path d="M115.2,80.0L115.9,73.3L118.3,80.0Z" fill="#2a4c1c"/><path d="M114.9,79.7L116.6,71.2L116.6,79.7Z" fill="#3a6420"/><path d="M113.0,79.2L114.6,69.6L115.9,79.2Z" fill="#10200a"/><path d="M112.4,78.8L113.6,71.7L114.6,78.8Z" fill="#1c3612"/><path d="M111.5,78.5L112.5,71.4L113.8,78.5Z" fill="#1c3612"/><path d="M109.1,77.7L110.3,67.9L111.9,77.7Z" fill="#1a3310"/><path d="M108.2,77.0L110.7,70.1L110.8,77.0Z" fill="#3a6420"/><path d="M107.1,76.0L107.8,70.2L109.9,76.0Z" fill="#3a6420"/><path d="M106.7,75.3L107.6,67.0L108.8,75.3Z" fill="#3a6420"/><path d="M105.4,74.0L105.1,67.4L107.6,74.0Z" fill="#3a6420"/><path d="M104.6,73.2L105.0,67.1L106.8,73.2Z" fill="#1c3612"/><path d="M345.5,73.6L345.1,69.2L347.6,73.6Z" fill="#15290c"/><path d="M345.3,73.9L347.2,69.4L347.6,73.9Z" fill="#1a3310"/><path d="M344.6,75.6L344.3,71.1L346.9,75.6Z" fill="#1c3612"/><path d="M344.3,76.5L345.6,72.1L346.4,76.5Z" fill="#22401a"/><path d="M342.7,77.8L344.5,71.3L345.9,77.8Z" fill="#1c3612"/><path d="M341.9,78.4L341.7,72.3L343.9,78.4Z" fill="#15290c"/><path d="M340.5,78.7L342.7,69.5L343.7,78.7Z" fill="#15290c"/><path d="M339.6,79.1L342.4,71.7L342.4,79.1Z" fill="#2a4c1c"/><path d="M337.8,79.8L338.6,69.1L340.7,79.8Z" fill="#1c3612"/><path d="M337.3,80.1L337.8,75.7L339.8,80.1Z" fill="#10200a"/><path d="M335.9,80.8L337.9,72.0L337.7,80.8Z" fill="#22401a"/><path d="M335.1,81.1L336.1,76.7L337.1,81.1Z" fill="#1c3612"/><path d="M333.2,81.5L334.7,76.6L336.3,81.5Z" fill="#3a6420"/><path d="M332.3,81.5L334.1,73.6L334.8,81.5Z" fill="#15290c"/><path d="M331.0,81.5L333.6,73.1L333.1,81.5Z" fill="#10200a"/><path d="M328.9,81.5L330.5,74.1L331.4,81.5Z" fill="#3a6420"/><path d="M327.7,81.5L329.9,73.8L330.0,81.5Z" fill="#22401a"/><path d="M326.5,81.5L328.5,72.7L329.1,81.5Z" fill="#3a6420"/><path d="M325.2,81.5L325.5,75.5L327.9,81.5Z" fill="#15290c"/><path d="M323.6,81.5L325.3,75.9L325.8,81.5Z" fill="#22401a"/><path d="M322.3,81.5L324.3,75.4L325.1,81.5Z" fill="#22401a"/><path d="M321.6,81.5L323.5,75.4L323.6,81.5Z" fill="#2a4c1c"/><path d="M319.3,81.5L320.6,70.5L321.6,81.5Z" fill="#1a3310"/><path d="M318.9,81.4L318.5,75.8L320.7,81.4Z" fill="#3a6420"/><path d="M317.2,80.5L317.8,72.1L319.7,80.5Z" fill="#10200a"/><path d="M315.9,79.5L316.4,73.8L318.2,79.5Z" fill="#2a4c1c"/><path d="M315.0,78.7L315.6,74.2L316.6,78.7Z" fill="#1c3612"/><path d="M313.5,77.8L315.0,73.7L315.5,77.8Z" fill="#3a6420"/><path d="M312.1,76.8L314.2,71.7L315.3,76.8Z" fill="#1c3612"/><path d="M312.3,75.5L313.3,70.9L314.2,75.5Z" fill="#22401a"/><path d="M311.3,73.9L312.9,70.8L313.8,73.9Z" fill="#22401a"/><path d="M310.9,72.5L311.5,68.7L313.1,72.5Z" fill="#10200a"/><path d="M237.5,95.5L231.1,93.1L237.5,97.1Z" fill="#22401a"/><path d="M237.5,97.9L231.9,95.6L237.5,99.8Z" fill="#1c3612"/><path d="M237.5,98.6L230.5,94.3L237.5,100.7Z" fill="#10200a"/><path d="M234.3,104.3L234.5,98.7L236.6,104.3Z" fill="#1c3612"/><path d="M233.5,105.4L233.3,100.0L235.8,105.4Z" fill="#1c3612"/><path d="M232.7,106.4L234.4,99.2L235.0,106.4Z" fill="#10200a"/><path d="M232.0,107.0L234.0,101.0L234.8,107.0Z" fill="#1c3612"/><path d="M231.2,108.7L233.6,103.1L233.0,108.7Z" fill="#10200a"/><path d="M229.9,109.7L231.3,105.9L232.8,109.7Z" fill="#1a3310"/><path d="M229.5,110.7L230.6,104.4L231.7,110.7Z" fill="#22401a"/><path d="M231.6,109.6L226.5,104.9L231.6,111.5Z" fill="#2a4c1c"/><path d="M232.6,113.4L228.5,109.0L232.6,114.8Z" fill="#22401a"/><path d="M233.0,114.4L228.3,113.4L233.0,116.5Z" fill="#1c3612"/><path d="M338.8,117.0L345.0,112.4L338.8,118.9Z" fill="#22401a"/><path d="M338.4,115.3L344.2,112.0L338.4,117.0Z" fill="#22401a"/><path d="M337.7,111.5L344.9,109.7L337.7,113.8Z" fill="#22401a"/><path d="M337.5,110.9L341.6,106.9L337.5,113.0Z" fill="#22401a"/><path d="M336.9,108.0L343.6,103.1L336.9,110.0Z" fill="#22401a"/><path d="M388.5,121.5L381.1,118.9L388.5,122.9Z" fill="#10200a"/><path d="M388.5,123.4L382.7,120.4L388.5,125.1Z" fill="#15290c"/><path d="M388.5,124.5L384.0,121.6L388.5,126.5Z" fill="#1c3612"/><path d="M388.5,126.6L382.2,122.2L388.5,128.6Z" fill="#2a4c1c"/><path d="M388.5,129.2L382.0,124.9L388.5,130.7Z" fill="#2a4c1c"/><path d="M388.5,130.8L382.3,125.8L388.5,132.1Z" fill="#15290c"/><path d="M388.5,134.5L384.2,130.8L388.5,136.2Z" fill="#10200a"/><path d="M388.5,135.9L381.3,134.7L388.5,137.9Z" fill="#10200a"/><path d="M388.5,138.0L384.0,134.7L388.5,139.7Z" fill="#2a4c1c"/><path d="M388.5,141.3L383.9,137.6L388.5,142.7Z" fill="#22401a"/><path d="M388.5,143.4L381.3,141.6L388.5,144.9Z" fill="#22401a"/><path d="M384.8,146.6L387.3,138.9L387.5,146.6Z" fill="#22401a"/><path d="M383.5,146.7L384.3,137.5L385.4,146.7Z" fill="#1c3612"/><path d="M381.4,146.8L383.5,140.2L384.5,146.8Z" fill="#22401a"/><path d="M380.7,146.9L381.8,141.0L382.9,146.9Z" fill="#15290c"/><path d="M380.1,146.9L381.7,139.9L382.1,146.9Z" fill="#10200a"/><path d="M377.9,147.1L379.2,138.0L380.0,147.1Z" fill="#1a3310"/><path d="M376.3,147.2L378.6,135.9L379.4,147.2Z" fill="#3a6420"/><path d="M374.9,147.3L376.7,140.8L377.8,147.3Z" fill="#1c3612"/><path d="M374.9,147.3L376.7,141.5L376.9,147.3Z" fill="#3a6420"/><path d="M372.7,147.4L375.2,137.1L375.3,147.4Z" fill="#1a3310"/><path d="M372.7,147.5L373.1,137.5L374.3,147.5Z" fill="#15290c"/><path d="M370.7,147.6L371.1,141.0L373.5,147.6Z" fill="#15290c"/><path d="M368.7,147.7L369.8,137.1L370.9,147.7Z" fill="#1c3612"/><path d="M366.9,147.8L368.3,141.5L369.8,147.8Z" fill="#3a6420"/><path d="M366.3,147.9L367.7,137.3L369.2,147.9Z" fill="#10200a"/><path d="M365.1,148.0L367.3,136.7L368.1,148.0Z" fill="#22401a"/><path d="M363.1,148.1L365.0,138.0L365.3,148.1Z" fill="#10200a"/><path d="M362.7,148.2L364.5,142.8L364.9,148.2Z" fill="#1c3612"/><path d="M360.4,148.3L360.8,138.1L363.5,148.3Z" fill="#15290c"/><path d="M359.2,148.4L360.3,139.6L362.3,148.4Z" fill="#2a4c1c"/><path d="M358.3,148.4L361.0,143.5L361.2,148.4Z" fill="#1c3612"/><path d="M357.0,148.6L356.5,143.3L358.7,148.6Z" fill="#22401a"/><path d="M356.0,148.6L356.9,142.5L358.5,148.6Z" fill="#1c3612"/><path d="M353.6,148.8L354.9,139.1L356.7,148.8Z" fill="#1a3310"/><path d="M352.4,148.9L354.7,138.2L355.0,148.9Z" fill="#2a4c1c"/><path d="M352.0,148.9L352.4,137.8L353.6,148.9Z" fill="#22401a"/><path d="M350.3,149.1L352.8,143.0L352.5,149.1Z" fill="#1c3612"/><path d="M348.8,149.3L349.6,138.1L351.0,149.3Z" fill="#15290c"/><path d="M346.5,149.6L346.8,138.5L349.5,149.6Z" fill="#15290c"/><path d="M346.3,149.7L348.0,141.1L347.9,149.7Z" fill="#15290c"/><path d="M344.3,150.0L346.3,140.0L346.2,150.0Z" fill="#2a4c1c"/><path d="M343.5,150.0L344.5,144.0L346.5,150.0Z" fill="#15290c"/><path d="M341.8,150.3L344.3,141.7L343.9,150.3Z" fill="#15290c"/><path d="M341.0,150.5L342.9,140.4L342.7,150.5Z" fill="#15290c"/><path d="M340.2,150.5L340.7,140.6L342.2,150.5Z" fill="#15290c"/><path d="M338.4,150.8L338.4,145.4L340.7,150.8Z" fill="#10200a"/><path d="M336.7,151.0L336.7,141.2L339.1,151.0Z" fill="#2a4c1c"/><path d="M335.5,151.2L338.1,142.4L338.3,151.2Z" fill="#1a3310"/><path d="M333.6,151.4L333.8,143.8L336.7,151.4Z" fill="#22401a"/><path d="M332.9,152.6L334.4,147.7L334.7,152.6Z" fill="#22401a"/><path d="M332.3,152.8L332.3,149.4L334.9,152.8Z" fill="#1c3612"/><path d="M330.9,154.8L332.0,149.3L333.7,154.8Z" fill="#2a4c1c"/><path d="M330.3,155.9L330.4,151.0L332.8,155.9Z" fill="#1a3310"/><path d="M329.6,156.6L331.2,150.9L332.6,156.6Z" fill="#3a6420"/><path d="M329.2,158.0L329.7,153.1L331.1,158.0Z" fill="#22401a"/><path d="M331.2,157.5L326.2,155.2L331.2,159.5Z" fill="#1c3612"/><path d="M331.7,160.2L324.6,158.7L331.7,161.6Z" fill="#10200a"/><path d="M332.0,162.1L325.6,157.5L332.0,163.4Z" fill="#2a4c1c"/><path d="M332.5,164.0L326.7,160.5L332.5,166.3Z" fill="#22401a"/><path d="M333.1,167.4L326.7,162.9L333.1,169.4Z" fill="#10200a"/><path d="M334.0,171.1L329.0,167.7L334.0,173.0Z" fill="#15290c"/><path d="M334.2,171.6L327.5,169.1L334.2,173.3Z" fill="#2a4c1c"/><path d="M334.9,174.0L329.2,169.8L334.9,176.1Z" fill="#2a4c1c"/><path d="M335.9,177.4L330.0,173.9L335.9,179.5Z" fill="#10200a"/><path d="M336.3,178.8L330.2,177.7L336.3,180.8Z" fill="#1c3612"/><path d="M337.0,181.3L332.0,180.1L337.0,182.9Z" fill="#15290c"/><path d="M337.5,183.1L333.2,179.4L337.5,184.8Z" fill="#10200a"/><path d="M337.9,184.2L332.8,181.3L337.9,186.0Z" fill="#15290c"/><path d="M338.5,186.9L331.8,183.7L338.5,189.0Z" fill="#10200a"/><path d="M338.5,191.0L331.9,189.5L338.5,192.4Z" fill="#10200a"/><path d="M338.5,191.7L332.8,188.9L338.5,193.7Z" fill="#1c3612"/><path d="M361.1,204.1L356.0,202.6L361.1,205.9Z" fill="#2a4c1c"/><path d="M361.9,207.2L357.8,204.6L361.9,209.2Z" fill="#2a4c1c"/><path d="M362.2,208.9L355.1,204.6L362.2,210.4Z" fill="#1c3612"/><path d="M363.0,212.1L357.4,209.0L363.0,213.4Z" fill="#15290c"/><path d="M360.4,216.2L362.6,207.6L362.8,216.2Z" fill="#3a6420"/><path d="M359.0,216.8L360.2,210.1L361.8,216.8Z" fill="#22401a"/><path d="M357.3,217.7L358.8,208.1L359.8,217.7Z" fill="#1a3310"/><path d="M356.6,218.1L359.1,212.1L358.8,218.1Z" fill="#15290c"/><path d="M354.9,218.8L357.6,210.8L357.8,218.8Z" fill="#10200a"/><path d="M354.5,219.2L355.3,214.4L356.8,219.2Z" fill="#10200a"/><path d="M353.4,219.8L354.0,213.6L355.5,219.8Z" fill="#15290c"/><path d="M352.5,220.2L352.8,212.0L354.9,220.2Z" fill="#3a6420"/><path d="M350.7,220.9L353.1,212.2L353.6,220.9Z" fill="#15290c"/><path d="M350.4,221.4L350.2,215.6L352.2,221.4Z" fill="#3a6420"/><path d="M348.0,222.3L349.4,217.0L350.9,222.3Z" fill="#3a6420"/><path d="M347.1,222.8L349.5,215.0L349.7,222.8Z" fill="#1a3310"/><path d="M345.6,223.4L347.5,215.3L348.6,223.4Z" fill="#15290c"/><path d="M344.9,223.9L347.1,216.8L347.5,223.9Z" fill="#2a4c1c"/><path d="M344.4,224.3L345.3,216.9L346.5,224.3Z" fill="#10200a"/><path d="M342.6,225.0L345.4,219.1L345.2,225.0Z" fill="#10200a"/><path d="M341.3,225.8L342.6,218.4L343.6,225.8Z" fill="#3a6420"/><path d="M339.6,226.4L341.3,222.0L342.6,226.4Z" fill="#15290c"/><path d="M339.5,226.8L339.1,219.6L341.3,226.8Z" fill="#10200a"/><path d="M337.1,227.7L337.4,218.2L340.2,227.7Z" fill="#1a3310"/><path d="M337.1,227.9L338.0,222.2L339.4,227.9Z" fill="#2a4c1c"/><path d="M335.0,228.7L336.2,222.3L338.0,228.7Z" fill="#3a6420"/><path d="M334.2,229.2L336.1,221.3L337.1,229.2Z" fill="#10200a"/><path d="M333.4,229.8L333.7,222.1L335.6,229.8Z" fill="#3a6420"/><path d="M331.4,230.6L332.4,220.7L334.4,230.6Z" fill="#2a4c1c"/><path d="M330.6,231.2L332.2,221.2L332.7,231.2Z" fill="#1a3310"/><path d="M329.3,231.6L330.2,223.7L332.4,231.6Z" fill="#22401a"/><path d="M328.4,232.3L329.9,226.1L330.2,232.3Z" fill="#1a3310"/><path d="M326.8,233.1L328.2,223.2L328.6,233.1Z" fill="#2a4c1c"/><path d="M326.3,233.4L326.4,226.9L328.2,233.4Z" fill="#3a6420"/><path d="M325.0,234.0L324.7,228.4L326.9,234.0Z" fill="#3a6420"/><path d="M323.2,234.8L325.1,227.4L325.6,234.8Z" fill="#2a4c1c"/><path d="M322.7,235.0L323.0,228.7L325.5,235.0Z" fill="#22401a"/><path d="M321.4,235.6L323.1,230.3L324.1,235.6Z" fill="#15290c"/><path d="M319.8,236.5L321.6,232.1L322.0,236.5Z" fill="#22401a"/><path d="M318.4,237.1L319.0,228.2L321.3,237.1Z" fill="#15290c"/><path d="M317.8,237.5L320.0,228.2L320.2,237.5Z" fill="#1c3612"/><path d="M316.2,238.3L318.2,230.6L318.5,238.3Z" fill="#3a6420"/><path d="M315.0,238.7L317.5,231.2L318.1,238.7Z" fill="#3a6420"/><path d="M314.2,239.5L315.0,229.8L315.9,239.5Z" fill="#1c3612"/><path d="M312.5,240.0L315.0,235.2L315.4,240.0Z" fill="#1c3612"/><path d="M312.2,240.3L313.4,235.1L314.5,240.3Z" fill="#3a6420"/><path d="M310.7,241.1L311.6,231.0L312.7,241.1Z" fill="#1c3612"/><path d="M308.8,242.0L309.6,235.2L311.1,242.0Z" fill="#22401a"/><path d="M307.9,242.7L310.0,236.1L309.5,242.7Z" fill="#3a6420"/><path d="M306.9,243.1L306.4,236.8L308.7,243.1Z" fill="#3a6420"/><path d="M305.5,243.5L306.8,234.2L308.3,243.5Z" fill="#2a4c1c"/><path d="M305.3,243.9L307.3,239.2L307.3,243.9Z" fill="#2a4c1c"/><path d="M302.8,245.0L304.8,237.0L305.1,245.0Z" fill="#15290c"/><path d="M302.4,245.2L304.4,240.7L304.7,245.2Z" fill="#22401a"/><path d="M301.4,245.7L302.7,236.3L303.8,245.7Z" fill="#1a3310"/><path d="M300.0,246.5L300.7,240.8L301.8,246.5Z" fill="#2a4c1c"/><path d="M299.0,247.0L300.4,239.3L300.9,247.0Z" fill="#2a4c1c"/><path d="M296.8,248.0L298.0,243.4L299.2,248.0Z" fill="#2a4c1c"/><path d="M296.1,248.4L297.7,241.7L298.5,248.4Z" fill="#1c3612"/><path d="M295.0,248.8L296.0,244.5L297.9,248.8Z" fill="#1a3310"/><path d="M293.5,249.6L295.6,244.8L296.1,249.6Z" fill="#15290c"/><path d="M292.9,249.8L293.4,242.2L295.8,249.8Z" fill="#3a6420"/><path d="M291.2,250.8L291.4,240.5L293.6,250.8Z" fill="#15290c"/><path d="M290.8,251.0L291.3,242.0L293.1,251.0Z" fill="#10200a"/><path d="M288.8,252.1L289.3,242.3L290.9,252.1Z" fill="#22401a"/><path d="M287.4,252.8L289.2,245.2L289.4,252.8Z" fill="#15290c"/><path d="M287.2,253.0L288.6,243.4L288.9,253.0Z" fill="#1c3612"/><path d="M285.6,253.5L287.8,247.0L288.6,253.5Z" fill="#22401a"/><path d="M284.3,254.2L285.2,248.8L287.0,254.2Z" fill="#3a6420"/><path d="M282.9,254.9L283.0,245.7L285.6,254.9Z" fill="#2a4c1c"/><path d="M281.4,255.8L281.3,250.4L283.5,255.8Z" fill="#1c3612"/><path d="M280.4,256.2L281.5,250.1L283.0,256.2Z" fill="#1a3310"/><path d="M279.4,256.6L282.0,249.6L282.1,256.6Z" fill="#2a4c1c"/><path d="M277.3,257.5L280.3,251.6L280.5,257.5Z" fill="#10200a"/><path d="M276.9,257.9L278.9,251.2L279.3,257.9Z" fill="#15290c"/><path d="M275.3,258.7L277.4,253.6L277.9,258.7Z" fill="#10200a"/><path d="M275.1,258.8L276.0,253.2L277.7,258.8Z" fill="#2a4c1c"/><path d="M274.1,259.4L274.9,254.2L276.5,259.4Z" fill="#22401a"/><path d="M272.0,260.4L272.9,252.6L274.5,260.4Z" fill="#1a3310"/><path d="M271.8,260.7L271.7,250.5L273.4,260.7Z" fill="#2a4c1c"/><path d="M270.3,261.3L270.6,253.6L272.3,261.3Z" fill="#22401a"/><path d="M269.0,261.8L271.8,253.8L271.7,261.8Z" fill="#15290c"/><path d="M268.1,262.4L270.4,252.9L270.4,262.4Z" fill="#22401a"/><path d="M265.4,263.5L268.5,254.2L268.6,263.5Z" fill="#1a3310"/><path d="M265.3,263.7L267.7,259.0L267.8,263.7Z" fill="#3a6420"/><path d="M264.2,264.1L264.6,255.2L266.9,264.1Z" fill="#1c3612"/><path d="M262.9,264.8L262.8,259.7L264.8,264.8Z" fill="#3a6420"/><path d="M261.4,265.2L262.5,258.6L263.9,265.2Z" fill="#2a4c1c"/><path d="M261.0,265.6L261.5,255.5L262.7,265.6Z" fill="#1a3310"/><path d="M258.4,266.4L260.8,258.7L261.3,266.4Z" fill="#10200a"/><path d="M258.5,266.6L259.2,260.2L260.2,266.6Z" fill="#2a4c1c"/><path d="M256.4,267.2L258.2,257.2L259.2,267.2Z" fill="#15290c"/><path d="M254.8,267.9L257.1,262.8L257.2,267.9Z" fill="#3a6420"/><path d="M254.7,268.1L255.1,262.8L256.5,268.1Z" fill="#1a3310"/><path d="M253.0,268.6L253.6,258.2L255.4,268.6Z" fill="#10200a"/><path d="M251.7,269.1L251.8,260.7L254.2,269.1Z" fill="#1c3612"/><path d="M249.9,269.8L251.5,264.9L252.5,269.8Z" fill="#2a4c1c"/><path d="M249.2,270.1L250.9,261.5L251.9,270.1Z" fill="#3a6420"/><path d="M246.9,271.0L247.1,266.4L249.8,271.0Z" fill="#1a3310"/><path d="M246.3,271.4L247.5,265.4L248.3,271.4Z" fill="#2a4c1c"/><path d="M244.9,271.8L245.6,264.3L247.5,271.8Z" fill="#1c3612"/><path d="M243.8,272.2L244.5,262.7L246.5,272.2Z" fill="#10200a"/><path d="M242.5,272.8L243.5,267.5L244.8,272.8Z" fill="#1c3612"/><path d="M241.1,273.3L243.2,267.0L243.9,273.3Z" fill="#3a6420"/><path d="M240.1,273.5L241.6,266.3L242.9,273.5Z" fill="#10200a"/><path d="M239.2,273.6L239.5,265.9L241.2,273.6Z" fill="#10200a"/><path d="M237.7,273.7L239.0,262.6L240.7,273.7Z" fill="#3a6420"/><path d="M235.2,273.9L237.4,263.8L238.3,273.9Z" fill="#15290c"/><path d="M234.4,274.0L235.6,266.1L236.8,274.0Z" fill="#1c3612"/><path d="M233.5,274.1L234.5,269.0L235.7,274.1Z" fill="#15290c"/><path d="M232.8,274.2L233.6,267.2L234.5,274.2Z" fill="#3a6420"/><path d="M230.5,274.3L232.7,266.6L232.9,274.3Z" fill="#22401a"/><path d="M229.9,274.4L230.7,268.0L232.1,274.4Z" fill="#10200a"/><path d="M228.4,274.5L229.5,266.1L230.3,274.5Z" fill="#10200a"/><path d="M226.8,274.6L229.0,267.0L229.2,274.6Z" fill="#2a4c1c"/><path d="M224.7,274.8L225.9,269.5L227.8,274.8Z" fill="#3a6420"/><path d="M223.4,274.9L223.4,266.5L225.6,274.9Z" fill="#2a4c1c"/><path d="M223.0,275.0L222.7,267.0L224.6,275.0Z" fill="#1c3612"/><path d="M221.1,275.1L223.2,267.0L223.0,275.1Z" fill="#15290c"/><path d="M220.4,275.2L222.8,266.4L222.3,275.2Z" fill="#1a3310"/><path d="M218.1,275.3L219.3,266.7L220.5,275.3Z" fill="#22401a"/><path d="M216.7,275.4L217.7,268.8L219.6,275.4Z" fill="#1a3310"/><path d="M216.5,275.5L218.8,268.1L218.6,275.5Z" fill="#3a6420"/><path d="M214.3,275.6L216.9,271.0L216.6,275.6Z" fill="#3a6420"/><path d="M212.8,275.8L212.4,267.3L214.7,275.8Z" fill="#22401a"/><path d="M212.2,275.8L214.5,266.9L214.8,275.8Z" fill="#15290c"/><path d="M210.0,276.0L211.8,269.8L212.5,276.0Z" fill="#15290c"/><path d="M210.1,276.0L211.5,269.3L211.9,276.0Z" fill="#22401a"/><path d="M207.8,276.1L210.1,267.4L210.2,276.1Z" fill="#1a3310"/><path d="M207.3,276.2L207.8,270.7L209.3,276.2Z" fill="#1a3310"/><path d="M204.9,276.3L206.3,269.1L208.0,276.3Z" fill="#2a4c1c"/><path d="M203.9,276.3L205.9,269.4L206.7,276.3Z" fill="#1a3310"/><path d="M202.2,276.5L204.7,270.1L204.6,276.5Z" fill="#1c3612"/><path d="M200.8,276.5L201.8,270.5L203.9,276.5Z" fill="#1c3612"/><path d="M199.7,276.6L200.8,267.3L202.1,276.6Z" fill="#2a4c1c"/><path d="M198.2,276.7L198.1,266.7L200.3,276.7Z" fill="#1a3310"/><path d="M197.3,276.8L198.0,266.0L199.6,276.8Z" fill="#3a6420"/><path d="M195.8,276.9L197.4,270.3L197.8,276.9Z" fill="#1c3612"/><path d="M193.9,276.9L194.5,267.9L196.7,276.9Z" fill="#3a6420"/><path d="M193.1,277.0L193.4,266.0L195.9,277.0Z" fill="#2a4c1c"/><path d="M192.1,277.1L194.1,270.9L193.8,277.1Z" fill="#15290c"/><path d="M190.6,277.2L192.4,272.3L192.9,277.2Z" fill="#10200a"/><path d="M188.8,277.2L191.8,271.8L191.9,277.2Z" fill="#15290c"/><path d="M187.9,277.3L189.3,266.3L190.9,277.3Z" fill="#15290c"/><path d="M186.6,277.4L186.3,270.9L188.7,277.4Z" fill="#3a6420"/><path d="M186.0,277.4L187.9,268.9L188.4,277.4Z" fill="#10200a"/><path d="M183.3,277.4L183.8,271.7L186.3,277.4Z" fill="#10200a"/><path d="M182.1,277.3L184.6,270.0L184.5,277.3Z" fill="#3a6420"/><path d="M181.3,277.2L182.3,266.6L182.9,277.2Z" fill="#10200a"/><path d="M179.6,277.1L181.2,270.3L181.9,277.1Z" fill="#2a4c1c"/><path d="M178.5,277.0L179.9,266.0L181.5,277.0Z" fill="#15290c"/><path d="M176.8,276.9L178.7,270.1L179.6,276.9Z" fill="#1a3310"/><path d="M176.3,276.8L177.9,267.2L179.1,276.8Z" fill="#3a6420"/><path d="M175.1,276.7L176.1,268.0L177.7,276.7Z" fill="#22401a"/><path d="M173.3,276.6L173.6,271.5L175.9,276.6Z" fill="#15290c"/><path d="M172.5,276.5L173.0,265.5L174.1,276.5Z" fill="#22401a"/><path d="M170.6,276.3L172.3,265.2L172.6,276.3Z" fill="#10200a"/><path d="M169.9,276.3L171.4,269.3L171.9,276.3Z" fill="#22401a"/><path d="M168.3,276.2L170.7,268.9L170.7,276.2Z" fill="#1a3310"/><path d="M166.2,276.0L168.9,266.7L168.9,276.0Z" fill="#1c3612"/><path d="M165.5,275.9L165.4,269.9L167.3,275.9Z" fill="#1a3310"/><path d="M163.2,275.8L165.8,268.7L165.9,275.8Z" fill="#3a6420"/><path d="M162.9,275.7L163.1,266.6L164.8,275.7Z" fill="#3a6420"/><path d="M161.2,275.6L162.5,265.6L163.7,275.6Z" fill="#1c3612"/><path d="M160.9,275.6L161.9,267.1L162.6,275.6Z" fill="#2a4c1c"/><path d="M159.4,275.4L161.3,267.2L161.2,275.4Z" fill="#22401a"/><path d="M157.8,275.3L157.8,269.4L160.3,275.3Z" fill="#2a4c1c"/><path d="M156.4,275.2L157.0,270.3L158.2,275.2Z" fill="#2a4c1c"/><path d="M155.0,275.1L157.1,267.4L157.9,275.1Z" fill="#22401a"/><path d="M153.9,275.0L153.6,270.5L155.8,275.0Z" fill="#22401a"/><path d="M151.8,274.9L154.7,270.0L155.0,274.9Z" fill="#10200a"/><path d="M150.2,274.7L150.2,266.9L152.2,274.7Z" fill="#15290c"/><path d="M148.8,274.6L149.9,263.3L151.5,274.6Z" fill="#22401a"/><path d="M148.1,274.6L148.0,263.7L150.3,274.6Z" fill="#1a3310"/><path d="M145.9,274.4L146.2,269.0L148.8,274.4Z" fill="#2a4c1c"/><path d="M145.1,274.3L147.7,268.9L148.3,274.3Z" fill="#3a6420"/><path d="M144.5,274.2L146.0,267.7L147.2,274.2Z" fill="#2a4c1c"/><path d="M142.9,274.1L143.0,268.0L145.2,274.1Z" fill="#15290c"/><path d="M141.1,273.9L142.9,264.3L142.9,273.9Z" fill="#22401a"/><path d="M139.6,273.8L140.3,262.8L142.6,273.8Z" fill="#10200a"/><path d="M139.2,273.7L141.1,269.0L141.8,273.7Z" fill="#10200a"/><path d="M137.8,273.5L139.1,268.8L140.1,273.5Z" fill="#3a6420"/><path d="M135.6,273.3L136.2,268.5L138.0,273.3Z" fill="#3a6420"/><path d="M134.2,273.2L136.3,264.7L136.7,273.2Z" fill="#3a6420"/><path d="M134.0,273.1L135.4,266.6L135.8,273.1Z" fill="#15290c"/><path d="M132.2,273.0L133.8,266.6L134.7,273.0Z" fill="#1a3310"/><path d="M130.4,272.8L131.5,264.0L132.7,272.8Z" fill="#1c3612"/><path d="M128.7,272.7L129.6,263.5L131.6,272.7Z" fill="#22401a"/><path d="M128.6,272.6L129.7,266.0L130.5,272.6Z" fill="#15290c"/><path d="M126.3,272.4L128.6,265.8L129.0,272.4Z" fill="#10200a"/><path d="M125.5,272.3L125.6,261.1L128.0,272.3Z" fill="#15290c"/><path d="M124.9,272.2L125.6,265.4L126.7,272.2Z" fill="#1c3612"/><path d="M123.7,272.1L124.0,262.6L125.6,272.1Z" fill="#1a3310"/><path d="M122.2,271.3L124.0,268.0L123.9,271.3Z" fill="#2a4c1c"/><path d="M121.0,270.1L123.3,264.7L123.4,270.1Z" fill="#1c3612"/><path d="M120.8,269.5L120.9,262.7L122.8,269.5Z" fill="#1a3310"/><path d="M120.0,268.6L120.4,261.5L122.4,268.6Z" fill="#2a4c1c"/><path d="M119.0,266.9L119.5,262.2L121.0,266.9Z" fill="#1c3612"/><path d="M118.4,266.2L118.8,260.9L120.6,266.2Z" fill="#2a4c1c"/><path d="M116.9,264.6L119.1,259.5L119.8,264.6Z" fill="#3a6420"/><path d="M116.6,263.6L117.4,256.7L118.8,263.6Z" fill="#2a4c1c"/><path d="M116.1,262.5L117.1,256.3L117.7,262.5Z" fill="#2a4c1c"/><path d="M115.5,261.7L115.9,256.8L117.3,261.7Z" fill="#22401a"/><path d="M114.4,260.6L117.0,256.4L116.9,260.6Z" fill="#1c3612"/><path d="M113.6,259.9L115.6,253.4L116.7,259.9Z" fill="#22401a"/><path d="M113.2,258.6L113.2,252.5L115.3,258.6Z" fill="#2a4c1c"/><path d="M112.3,257.5L113.9,250.6L114.7,257.5Z" fill="#10200a"/><path d="M111.9,256.4L113.7,249.8L113.6,256.4Z" fill="#10200a"/><path d="M110.3,255.0L111.0,250.2L113.3,255.0Z" fill="#1a3310"/><path d="M110.3,254.6L110.2,250.6L112.7,254.6Z" fill="#1a3310"/><path d="M109.2,253.0L110.3,247.3L111.6,253.0Z" fill="#10200a"/><path d="M108.9,252.1L110.4,247.2L110.6,252.1Z" fill="#2a4c1c"/><path d="M107.2,250.5L109.2,247.2L110.1,250.5Z" fill="#3a6420"/><path d="M106.4,249.5L108.0,245.6L109.5,249.5Z" fill="#15290c"/><path d="M106.3,249.2L107.1,243.9L109.2,249.2Z" fill="#22401a"/><path d="M105.9,248.2L106.3,241.2L108.3,248.2Z" fill="#1a3310"/><path d="M104.8,247.0L106.7,241.1L107.7,247.0Z" fill="#3a6420"/><path d="M104.1,245.5L104.8,242.2L106.3,245.5Z" fill="#22401a"/><path d="M104.0,245.0L104.9,241.8L105.8,245.0Z" fill="#22401a"/><path d="M102.1,243.3L105.1,238.8L105.3,243.3Z" fill="#2a4c1c"/><path d="M101.3,242.0L103.3,237.8L104.3,242.0Z" fill="#2a4c1c"/><path d="M101.5,241.4L103.6,238.0L103.2,241.4Z" fill="#2a4c1c"/><path d="M100.0,240.2L101.0,236.9L103.1,240.2Z" fill="#15290c"/><path d="M99.4,239.1L100.5,232.9L102.2,239.1Z" fill="#10200a"/><path d="M99.0,238.3L101.3,232.9L101.5,238.3Z" fill="#1a3310"/><path d="M97.7,236.6L98.0,232.1L100.5,236.6Z" fill="#1a3310"/><path d="M96.6,236.0L96.8,228.9L99.7,236.0Z" fill="#22401a"/><path d="M96.3,235.6L97.9,231.1L98.9,235.6Z" fill="#2a4c1c"/><path d="M95.4,234.8L95.6,226.1L97.1,234.8Z" fill="#22401a"/><path d="M93.4,234.1L94.8,227.9L96.5,234.1Z" fill="#1a3310"/><path d="M92.3,233.3L93.1,227.0L95.1,233.3Z" fill="#15290c"/><path d="M91.5,232.5L93.1,227.9L93.4,232.5Z" fill="#1a3310"/><path d="M90.8,232.2L90.7,225.8L93.0,232.2Z" fill="#1c3612"/><path d="M89.6,231.3L89.2,222.7L91.3,231.3Z" fill="#22401a"/><path d="M88.2,230.6L87.9,223.2L90.4,230.6Z" fill="#1c3612"/><path d="M86.6,229.8L89.1,222.2L89.4,229.8Z" fill="#10200a"/><path d="M86.3,229.3L88.4,222.9L88.0,229.3Z" fill="#15290c"/><path d="M84.6,228.4L84.6,223.3L86.8,228.4Z" fill="#1c3612"/><path d="M84.0,227.9L84.2,223.0L85.8,227.9Z" fill="#1c3612"/><path d="M82.5,227.1L82.7,222.5L84.5,227.1Z" fill="#1a3310"/><path d="M81.2,226.4L81.2,218.6L83.5,226.4Z" fill="#10200a"/><path d="M79.4,225.3L81.6,219.3L82.0,225.3Z" fill="#1c3612"/><path d="M78.6,225.0L80.5,218.4L81.6,225.0Z" fill="#2a4c1c"/><path d="M77.7,224.5L78.4,218.5L80.9,224.5Z" fill="#1c3612"/><path d="M77.0,223.8L78.8,217.3L79.2,223.8Z" fill="#1a3310"/><path d="M75.6,222.9L76.2,215.4L77.6,222.9Z" fill="#3a6420"/><path d="M86.5,208.8L93.8,206.8L86.5,210.4Z" fill="#2a4c1c"/><path d="M86.5,207.5L90.6,203.6L86.5,209.6Z" fill="#15290c"/><path d="M86.5,204.3L92.9,199.8L86.5,205.9Z" fill="#22401a"/><path d="M108.3,195.0L112.9,192.6L108.3,196.3Z" fill="#15290c"/><path d="M109.4,192.5L113.2,187.6L109.4,194.6Z" fill="#22401a"/><path d="M110.2,190.9L116.7,186.4L110.2,192.8Z" fill="#22401a"/><path d="M110.5,188.6L115.8,184.1L110.5,190.8Z" fill="#2a4c1c"/><path d="M110.6,186.1L115.0,184.2L110.6,188.4Z" fill="#1c3612"/><path d="M110.6,184.9L116.6,181.3L110.6,186.8Z" fill="#22401a"/><path d="M110.7,180.8L117.5,179.2L110.7,182.4Z" fill="#10200a"/><path d="M110.7,180.0L116.5,176.6L110.7,181.8Z" fill="#2a4c1c"/><path d="M110.7,177.8L116.4,173.9L110.7,179.5Z" fill="#2a4c1c"/><path d="M110.8,175.3L116.5,173.3L110.8,177.7Z" fill="#10200a"/><path d="M110.8,173.0L115.3,170.9L110.8,175.3Z" fill="#22401a"/><path d="M110.9,169.3L116.1,167.8L110.9,171.1Z" fill="#22401a"/><path d="M110.9,168.2L117.8,166.5L110.9,169.8Z" fill="#1c3612"/><path d="M111.0,164.8L115.6,159.9L111.0,166.8Z" fill="#15290c"/><path d="M209.6,137.8L214.8,135.0L209.6,139.6Z" fill="#22401a"/><path d="M209.8,136.1L214.4,132.4L209.8,137.8Z" fill="#22401a"/><path d="M210.1,133.0L217.2,130.2L210.1,135.1Z" fill="#22401a"/><path d="M210.4,130.5L215.1,126.5L210.4,132.6Z" fill="#10200a"/><path d="M210.5,127.6L216.4,125.2L210.5,129.8Z" fill="#15290c"/><path d="M210.5,126.0L217.5,122.6L210.5,127.5Z" fill="#1c3612"/><path d="M210.5,123.2L216.6,120.8L210.5,125.1Z" fill="#22401a"/><path d="M210.5,120.8L217.0,118.7L210.5,122.9Z" fill="#2a4c1c"/><path d="M210.5,118.7L215.6,116.7L210.5,120.7Z" fill="#10200a"/><path d="M210.5,117.3L216.3,114.7L210.5,119.4Z" fill="#15290c"/><path d="M210.5,114.4L216.2,111.1L210.5,116.1Z" fill="#15290c"/><path d="M210.5,112.1L215.0,109.7L210.5,113.9Z" fill="#22401a"/><path d="M210.5,109.5L217.8,106.7L210.5,111.7Z" fill="#15290c"/><path d="M210.5,106.7L216.3,103.9L210.5,109.1Z" fill="#22401a"/><path d="M210.5,105.5L216.2,104.2L210.5,107.7Z" fill="#10200a"/><path d="M210.5,102.7L214.6,100.6L210.5,104.2Z" fill="#1c3612"/><path d="M210.5,101.7L217.1,97.6L210.5,103.5Z" fill="#2a4c1c"/><path d="M210.5,98.7L215.4,95.4L210.5,100.5Z" fill="#1c3612"/><path d="M210.5,96.2L217.2,93.5L210.5,98.3Z" fill="#15290c"/><path d="M210.5,93.4L217.4,89.0L210.5,94.7Z" fill="#1c3612"/><path d="M399.5,323.9L394.6,319.0L399.5,325.1Z" fill="#10200a"/><path d="M399.5,324.6L392.8,322.9L399.5,327.0Z" fill="#2a4c1c"/><path d="M399.5,327.7L393.4,325.1L399.5,329.9Z" fill="#2a4c1c"/><path d="M399.5,329.2L394.8,327.7L399.5,330.6Z" fill="#1c3612"/><path d="M399.5,332.3L394.9,327.3L399.5,334.2Z" fill="#1c3612"/><path d="M399.5,334.3L392.5,329.1L399.5,335.8Z" fill="#10200a"/><path d="M399.5,336.0L394.1,334.8L399.5,338.1Z" fill="#1c3612"/><path d="M399.5,340.5L392.5,338.2L399.5,341.9Z" fill="#1c3612"/><path d="M395.7,343.6L397.1,335.1L398.4,343.6Z" fill="#2a4c1c"/><path d="M395.1,344.2L394.9,336.5L397.3,344.2Z" fill="#3a6420"/><path d="M393.6,345.1L394.1,340.5L396.0,345.1Z" fill="#1c3612"/><path d="M392.9,345.5L395.3,338.6L395.4,345.5Z" fill="#3a6420"/><path d="M391.6,346.4L393.3,338.1L393.9,346.4Z" fill="#1c3612"/><path d="M390.4,347.2L392.9,338.5L392.6,347.2Z" fill="#3a6420"/><path d="M389.7,347.4L390.6,341.8L392.6,347.4Z" fill="#2a4c1c"/><path d="M388.7,348.1L391.3,339.1L391.5,348.1Z" fill="#3a6420"/><path d="M387.7,348.7L389.0,344.1L390.5,348.7Z" fill="#10200a"/><path d="M385.8,350.1L388.5,345.1L388.2,350.1Z" fill="#22401a"/><path d="M385.8,350.3L387.2,342.2L387.6,350.3Z" fill="#15290c"/><path d="M384.0,351.5L384.4,342.3L385.7,351.5Z" fill="#10200a"/><path d="M383.4,351.8L384.0,342.5L385.2,351.8Z" fill="#1c3612"/><path d="M381.7,352.8L381.6,344.3L383.9,352.8Z" fill="#10200a"/><path d="M381.6,353.0L381.7,346.2L383.4,353.0Z" fill="#1a3310"/><path d="M379.8,354.0L379.8,350.0L382.0,354.0Z" fill="#3a6420"/><path d="M379.0,354.7L379.5,349.9L380.7,354.7Z" fill="#1a3310"/><path d="M377.2,355.7L377.7,351.1L379.4,355.7Z" fill="#22401a"/><path d="M376.3,356.4L378.7,348.0L378.1,356.4Z" fill="#15290c"/><path d="M375.6,356.6L375.9,349.3L378.2,356.6Z" fill="#1c3612"/><path d="M374.1,357.8L374.8,350.1L376.0,357.8Z" fill="#1a3310"/><path d="M372.7,358.3L373.2,353.0L375.8,358.3Z" fill="#10200a"/><path d="M371.4,359.1L372.4,352.9L374.6,359.1Z" fill="#15290c"/><path d="M371.3,359.6L372.6,351.8L373.3,359.6Z" fill="#1a3310"/><path d="M369.4,360.6L371.8,352.0L372.1,360.6Z" fill="#1a3310"/><path d="M368.1,361.5L368.4,356.3L370.6,361.5Z" fill="#22401a"/><path d="M367.4,361.8L370.3,357.4L370.4,361.8Z" fill="#22401a"/><path d="M366.4,362.6L366.4,357.1L369.0,362.6Z" fill="#10200a"/><path d="M364.9,363.5L366.9,353.4L366.7,363.5Z" fill="#2a4c1c"/><path d="M364.4,363.8L365.2,356.1L366.2,363.8Z" fill="#3a6420"/><path d="M363.7,364.1L363.7,356.2L365.3,364.1Z" fill="#10200a"/><path d="M361.3,365.2L362.9,358.4L363.3,365.2Z" fill="#3a6420"/><path d="M360.9,365.4L361.9,356.7L362.6,365.4Z" fill="#2a4c1c"/><path d="M360.0,365.8L362.1,361.1L361.7,365.8Z" fill="#3a6420"/><path d="M358.4,366.4L360.5,360.1L360.9,366.4Z" fill="#1a3310"/><path d="M356.5,367.2L358.5,362.6L359.2,367.2Z" fill="#3a6420"/><path d="M355.7,367.5L356.0,361.7L358.7,367.5Z" fill="#2a4c1c"/><path d="M354.2,368.3L356.3,362.1L357.0,368.3Z" fill="#10200a"/><path d="M354.3,368.5L355.1,363.4L355.9,368.5Z" fill="#1c3612"/><path d="M351.9,369.3L352.3,360.1L354.7,369.3Z" fill="#15290c"/><path d="M350.4,370.0L350.7,360.2L353.2,370.0Z" fill="#10200a"/><path d="M349.9,370.3L350.4,363.3L352.3,370.3Z" fill="#2a4c1c"/><path d="M348.4,371.0L348.3,363.6L350.8,371.0Z" fill="#3a6420"/><path d="M347.5,371.5L347.3,365.0L349.5,371.5Z" fill="#2a4c1c"/><path d="M345.8,372.1L345.7,367.2L348.5,372.1Z" fill="#3a6420"/><path d="M344.6,372.8L345.4,367.0L346.9,372.8Z" fill="#15290c"/><path d="M344.5,373.0L346.3,362.6L346.2,373.0Z" fill="#1a3310"/><path d="M342.4,373.8L343.2,366.9L344.6,373.8Z" fill="#1a3310"/><path d="M341.6,374.1L341.7,364.6L344.1,374.1Z" fill="#1a3310"/><path d="M339.5,375.0L342.4,369.6L342.4,375.0Z" fill="#22401a"/><path d="M339.7,375.1L341.8,367.8L341.8,375.1Z" fill="#1c3612"/><path d="M338.4,375.6L338.9,368.4L340.6,375.6Z" fill="#3a6420"/><path d="M336.9,376.2L338.3,368.0L339.2,376.2Z" fill="#22401a"/><path d="M334.7,377.1L336.2,367.9L337.4,377.1Z" fill="#3a6420"/><path d="M334.6,377.2L335.0,373.0L336.9,377.2Z" fill="#1c3612"/><path d="M333.3,378.0L333.6,369.3L334.9,378.0Z" fill="#3a6420"/><path d="M331.5,378.5L331.7,368.8L334.3,378.5Z" fill="#2a4c1c"/><path d="M329.7,379.2L332.7,372.3L332.9,379.2Z" fill="#15290c"/><path d="M328.9,379.6L331.6,374.7L332.0,379.6Z" fill="#2a4c1c"/><path d="M328.4,380.0L330.3,370.0L330.8,380.0Z" fill="#2a4c1c"/><path d="M327.3,380.3L327.5,375.2L330.2,380.3Z" fill="#2a4c1c"/><path d="M326.7,380.8L327.0,372.3L328.5,380.8Z" fill="#3a6420"/><path d="M324.8,381.5L326.9,372.1L327.5,381.5Z" fill="#1c3612"/><path d="M323.2,382.1L323.7,376.3L326.3,382.1Z" fill="#3a6420"/><path d="M322.5,382.7L323.3,377.4L324.4,382.7Z" fill="#22401a"/><path d="M321.4,382.9L322.7,376.4L324.2,382.9Z" fill="#22401a"/><path d="M320.5,383.5L322.0,378.5L322.4,383.5Z" fill="#3a6420"/><path d="M318.8,384.3L320.8,376.2L320.7,384.3Z" fill="#15290c"/><path d="M318.2,384.5L319.3,378.7L320.4,384.5Z" fill="#1a3310"/><path d="M316.9,385.1L319.2,375.6L318.8,385.1Z" fill="#3a6420"/><path d="M315.4,385.6L316.3,375.9L317.4,385.6Z" fill="#3a6420"/><path d="M313.8,385.7L315.5,380.4L315.5,385.7Z" fill="#15290c"/><path d="M313.1,385.8L314.6,375.6L315.3,385.8Z" fill="#1a3310"/><path d="M311.4,385.9L311.7,377.3L314.5,385.9Z" fill="#10200a"/><path d="M310.0,386.1L310.3,377.1L312.9,386.1Z" fill="#3a6420"/><path d="M308.5,386.3L309.2,379.5L310.2,386.3Z" fill="#15290c"/><path d="M306.5,386.4L307.9,378.9L309.3,386.4Z" fill="#22401a"/><path d="M305.9,386.5L306.0,380.8L307.9,386.5Z" fill="#1c3612"/><path d="M304.6,386.6L306.2,381.1L307.2,386.6Z" fill="#1a3310"/><path d="M303.5,386.7L303.5,379.4L306.0,386.7Z" fill="#1c3612"/><path d="M302.0,386.9L304.2,379.5L304.7,386.9Z" fill="#15290c"/><path d="M300.3,387.0L303.2,377.0L303.1,387.0Z" fill="#3a6420"/><path d="M298.8,387.2L299.8,379.3L301.7,387.2Z" fill="#2a4c1c"/><path d="M298.3,387.3L298.7,380.1L300.2,387.3Z" fill="#15290c"/><path d="M297.5,387.3L299.5,377.2L299.6,387.3Z" fill="#22401a"/><path d="M295.0,387.5L298.0,377.7L298.2,387.5Z" fill="#10200a"/><path d="M294.4,387.6L296.5,381.5L296.8,387.6Z" fill="#1a3310"/><path d="M293.6,387.7L295.6,376.3L295.5,387.7Z" fill="#3a6420"/><path d="M291.2,387.9L291.8,376.9L294.4,387.9Z" fill="#15290c"/><path d="M289.9,388.1L292.5,378.0L292.6,388.1Z" fill="#10200a"/><path d="M288.5,388.3L288.7,381.4L291.0,388.3Z" fill="#15290c"/><path d="M286.7,388.5L288.4,378.4L289.8,388.5Z" fill="#15290c"/><path d="M286.4,388.6L286.6,383.5L288.4,388.6Z" fill="#2a4c1c"/><path d="M284.8,388.8L287.0,382.1L287.4,388.8Z" fill="#1c3612"/><path d="M283.0,389.1L283.9,378.2L286.0,389.1Z" fill="#10200a"/><path d="M283.0,389.1L282.7,379.8L284.8,389.1Z" fill="#2a4c1c"/><path d="M280.6,389.4L283.0,378.3L282.8,389.4Z" fill="#22401a"/><path d="M279.6,389.6L282.1,382.8L281.8,389.6Z" fill="#1a3310"/><path d="M277.3,389.8L279.4,379.9L280.5,389.8Z" fill="#15290c"/><path d="M276.4,390.0L278.3,381.6L279.4,390.0Z" fill="#1c3612"/><path d="M276.3,390.1L276.7,381.5L278.2,390.1Z" fill="#1a3310"/><path d="M275.0,390.3L276.4,384.6L276.6,390.3Z" fill="#2a4c1c"/><path d="M272.8,390.5L273.0,379.1L276.0,390.5Z" fill="#2a4c1c"/><path d="M271.9,390.6L273.6,380.6L274.4,390.6Z" fill="#10200a"/><path d="M269.6,390.9L270.2,385.5L272.4,390.9Z" fill="#1c3612"/><path d="M269.9,391.0L271.4,380.4L271.6,391.0Z" fill="#1a3310"/><path d="M267.9,391.3L267.8,384.5L269.5,391.3Z" fill="#1a3310"/><path d="M267.3,391.3L266.7,385.1L269.1,391.3Z" fill="#22401a"/><path d="M265.5,391.7L266.2,384.6L267.4,391.7Z" fill="#22401a"/><path d="M263.9,392.1L266.2,385.3L266.8,392.1Z" fill="#2a4c1c"/><path d="M262.8,392.7L262.5,383.8L264.7,392.7Z" fill="#3a6420"/><path d="M262.3,392.8L262.1,388.4L264.3,392.8Z" fill="#1c3612"/><path d="M260.5,393.4L262.0,386.6L263.3,393.4Z" fill="#10200a"/><path d="M259.0,393.9L261.1,383.1L262.0,393.9Z" fill="#22401a"/><path d="M257.0,394.6L257.5,389.2L260.0,394.6Z" fill="#10200a"/><path d="M256.9,394.8L258.2,384.0L259.2,394.8Z" fill="#1a3310"/><path d="M255.5,395.3L255.3,386.6L257.6,395.3Z" fill="#22401a"/><path d="M254.4,395.8L254.9,386.3L256.2,395.8Z" fill="#22401a"/><path d="M253.3,396.2L254.6,386.7L255.9,396.2Z" fill="#10200a"/><path d="M252.4,396.7L252.2,391.4L254.5,396.7Z" fill="#3a6420"/><path d="M250.9,397.4L253.3,388.2L253.3,397.4Z" fill="#1c3612"/><path d="M249.9,398.0L252.0,390.3L251.8,398.0Z" fill="#1c3612"/><path d="M248.4,398.6L248.8,394.1L250.7,398.6Z" fill="#3a6420"/><path d="M246.8,399.3L248.7,394.7L249.6,399.3Z" fill="#10200a"/><path d="M245.3,400.1L247.2,390.8L247.5,400.1Z" fill="#15290c"/><path d="M243.9,400.6L245.1,391.1L246.8,400.6Z" fill="#2a4c1c"/><path d="M242.6,401.3L243.1,391.2L245.1,401.3Z" fill="#1c3612"/><path d="M242.0,401.5L243.4,390.8L244.8,401.5Z" fill="#2a4c1c"/><path d="M239.8,401.9L239.9,392.7L242.4,401.9Z" fill="#3a6420"/><path d="M239.3,402.0L239.3,391.0L241.1,402.0Z" fill="#15290c"/><path d="M237.7,402.1L239.1,394.7L240.9,402.1Z" fill="#3a6420"/><path d="M236.2,402.4L238.5,392.2L238.3,402.4Z" fill="#3a6420"/><path d="M235.5,402.5L236.1,395.4L237.8,402.5Z" fill="#1c3612"/><path d="M233.9,402.8L235.3,392.0L235.5,402.8Z" fill="#2a4c1c"/><path d="M232.2,403.0L232.3,395.6L234.5,403.0Z" fill="#2a4c1c"/><path d="M231.0,403.2L230.7,392.1L232.8,403.2Z" fill="#3a6420"/><path d="M230.0,403.3L230.7,396.9L232.4,403.3Z" fill="#22401a"/><path d="M231.6,401.7L225.6,398.8L231.6,403.7Z" fill="#15290c"/><path d="M231.8,404.7L225.7,400.6L231.8,406.1Z" fill="#10200a"/><path d="M232.1,407.2L225.7,406.2L232.1,409.5Z" fill="#22401a"/><path d="M232.5,411.3L228.4,407.1L232.5,413.5Z" fill="#1c3612"/><path d="M262.1,437.5L264.1,427.1L265.1,437.5Z" fill="#3a6420"/><path d="M261.0,437.5L263.2,430.9L263.8,437.5Z" fill="#1c3612"/><path d="M259.7,437.5L260.1,430.1L262.4,437.5Z" fill="#15290c"/><path d="M257.7,437.5L258.9,430.1L260.1,437.5Z" fill="#1c3612"/><path d="M256.8,437.5L257.1,429.4L258.6,437.5Z" fill="#2a4c1c"/><path d="M255.7,437.5L257.2,427.5L258.2,437.5Z" fill="#15290c"/><path d="M254.4,437.5L255.2,427.2L257.4,437.5Z" fill="#22401a"/><path d="M253.8,437.5L254.4,430.5L255.8,437.5Z" fill="#22401a"/><path d="M252.0,437.5L251.5,428.6L253.8,437.5Z" fill="#1c3612"/><path d="M250.0,437.5L251.5,429.9L253.2,437.5Z" fill="#2a4c1c"/><path d="M249.0,437.5L251.2,431.9L252.0,437.5Z" fill="#1a3310"/><path d="M248.7,437.5L250.6,432.8L250.4,437.5Z" fill="#3a6420"/><path d="M245.8,437.5L247.6,427.0L248.4,437.5Z" fill="#1c3612"/><path d="M244.7,437.5L247.6,429.4L247.7,437.5Z" fill="#1a3310"/><path d="M244.4,437.5L246.0,426.6L247.0,437.5Z" fill="#10200a"/><path d="M242.6,437.5L244.8,428.7L245.7,437.5Z" fill="#1a3310"/><path d="M241.2,437.5L241.8,430.0L243.4,437.5Z" fill="#1c3612"/><path d="M240.3,437.5L241.9,430.9L242.7,437.5Z" fill="#2a4c1c"/><path d="M239.0,437.5L241.4,429.4L241.7,437.5Z" fill="#1c3612"/><path d="M237.4,437.5L239.0,428.8L239.5,437.5Z" fill="#22401a"/><path d="M236.5,437.5L238.9,426.1L239.1,437.5Z" fill="#1c3612"/><path d="M234.4,437.5L234.8,426.3L237.1,437.5Z" fill="#2a4c1c"/><path d="M232.8,437.5L235.2,426.7L235.7,437.5Z" fill="#2a4c1c"/><path d="M232.5,437.5L232.0,430.8L234.4,437.5Z" fill="#22401a"/><path d="M230.2,437.5L231.0,431.2L232.5,437.5Z" fill="#10200a"/><path d="M229.2,437.5L230.1,426.0L232.1,437.5Z" fill="#1a3310"/><path d="M228.3,437.5L231.0,429.3L231.2,437.5Z" fill="#1a3310"/><path d="M227.4,437.5L228.8,430.9L229.2,437.5Z" fill="#2a4c1c"/><path d="M226.3,437.5L226.5,432.3L228.1,437.5Z" fill="#3a6420"/><path d="M223.9,437.5L226.6,426.6L227.0,437.5Z" fill="#1a3310"/><path d="M223.3,437.5L224.2,430.5L226.1,437.5Z" fill="#3a6420"/><path d="M221.1,437.5L222.3,430.4L223.7,437.5Z" fill="#10200a"/><path d="M220.4,437.5L223.0,426.9L222.9,437.5Z" fill="#10200a"/><path d="M219.4,437.5L220.9,431.6L221.2,437.5Z" fill="#2a4c1c"/><path d="M217.8,437.5L218.1,432.6L220.7,437.5Z" fill="#15290c"/><path d="M216.4,437.5L219.3,426.1L219.4,437.5Z" fill="#15290c"/><path d="M215.2,437.5L216.6,428.0L218.0,437.5Z" fill="#1a3310"/><path d="M213.6,437.5L214.3,430.8L215.3,437.5Z" fill="#15290c"/><path d="M212.0,437.5L213.4,431.8L214.8,437.5Z" fill="#3a6420"/><path d="M210.9,437.5L211.9,432.1L213.2,437.5Z" fill="#22401a"/><path d="M209.7,437.5L209.6,430.3L211.4,437.5Z" fill="#1c3612"/><path d="M207.8,437.5L209.3,426.8L210.7,437.5Z" fill="#10200a"/><path d="M207.3,437.5L208.9,428.6L209.3,437.5Z" fill="#1c3612"/><path d="M206.3,437.5L206.9,432.3L208.7,437.5Z" fill="#10200a"/><path d="M204.5,437.5L206.2,430.9L206.5,437.5Z" fill="#2a4c1c"/><path d="M203.2,437.5L203.5,430.0L205.9,437.5Z" fill="#22401a"/><path d="M201.9,437.5L204.8,431.7L205.1,437.5Z" fill="#22401a"/><path d="M201.0,437.5L201.8,431.4L204.2,437.5Z" fill="#10200a"/><path d="M199.5,437.5L201.0,431.8L201.7,437.5Z" fill="#10200a"/><path d="M198.1,437.5L199.9,428.5L201.0,437.5Z" fill="#2a4c1c"/><path d="M196.1,437.5L196.0,428.4L198.8,437.5Z" fill="#1a3310"/><path d="M196.4,437.5L196.5,429.9L198.2,437.5Z" fill="#1a3310"/><path d="M194.6,437.5L195.3,428.1L197.2,437.5Z" fill="#1a3310"/><path d="M193.4,437.5L195.3,429.4L196.0,437.5Z" fill="#22401a"/><path d="M191.1,437.5L191.3,432.3L193.8,437.5Z" fill="#10200a"/><path d="M189.9,437.5L192.0,429.5L192.5,437.5Z" fill="#3a6420"/><path d="M188.9,437.5L189.6,431.6L191.6,437.5Z" fill="#10200a"/><path d="M187.5,437.5L188.8,426.6L190.2,437.5Z" fill="#15290c"/><path d="M186.8,437.5L189.3,428.3L189.8,437.5Z" fill="#1a3310"/><path d="M186.0,433.6L192.4,432.5L186.0,435.9Z" fill="#10200a"/><path d="M187.1,430.3L192.4,425.3L187.1,432.2Z" fill="#1c3612"/><path d="M187.5,429.2L191.9,427.7L187.5,430.5Z" fill="#1c3612"/><path d="M216.3,413.1L221.7,411.7L216.3,415.1Z" fill="#10200a"/><path d="M216.6,411.9L222.8,409.3L216.6,413.3Z" fill="#22401a"/><path d="M217.5,407.1L224.0,404.4L217.5,408.7Z" fill="#1c3612"/><path d="M217.7,406.5L224.9,404.3L217.7,408.2Z" fill="#22401a"/><path d="M218.4,402.9L223.8,398.2L218.4,404.6Z" fill="#15290c"/><path d="M219.0,404.4L221.2,395.8L220.7,404.4Z" fill="#15290c"/><path d="M217.4,403.8L218.8,393.8L219.8,403.8Z" fill="#22401a"/><path d="M216.1,403.2L215.8,396.6L218.3,403.2Z" fill="#1a3310"/><path d="M213.4,402.2L214.9,393.3L216.5,402.2Z" fill="#22401a"/><path d="M213.8,402.0L213.9,395.2L215.5,402.0Z" fill="#1c3612"/><path d="M212.3,401.5L214.2,391.0L214.7,401.5Z" fill="#1a3310"/><path d="M210.1,401.3L211.0,390.0L212.8,401.3Z" fill="#2a4c1c"/><path d="M208.8,401.1L210.7,392.3L211.1,401.1Z" fill="#22401a"/><path d="M208.0,401.0L210.2,391.8L210.2,401.0Z" fill="#2a4c1c"/><path d="M206.3,400.8L208.4,392.0L207.9,400.8Z" fill="#2a4c1c"/><path d="M204.4,400.6L204.6,390.2L207.4,400.6Z" fill="#22401a"/><path d="M204.2,400.5L205.3,393.8L206.3,400.5Z" fill="#2a4c1c"/><path d="M202.5,400.3L203.4,393.1L204.5,400.3Z" fill="#3a6420"/><path d="M201.1,400.2L201.8,395.1L203.5,400.2Z" fill="#22401a"/><path d="M199.7,400.0L199.4,395.4L201.9,400.0Z" fill="#2a4c1c"/><path d="M199.2,400.0L200.8,394.9L201.7,400.0Z" fill="#1c3612"/><path d="M196.7,399.7L197.9,391.3L199.3,399.7Z" fill="#1c3612"/><path d="M196.4,399.6L197.2,394.8L198.4,399.6Z" fill="#2a4c1c"/><path d="M194.2,399.4L195.1,390.8L196.9,399.4Z" fill="#22401a"/><path d="M194.1,399.4L194.6,389.6L196.1,399.4Z" fill="#3a6420"/><path d="M191.9,399.1L192.7,389.1L194.3,399.1Z" fill="#10200a"/><path d="M191.7,399.1L193.2,393.4L193.5,399.1Z" fill="#1a3310"/><path d="M189.8,398.9L189.7,392.6L191.7,398.9Z" fill="#3a6420"/><path d="M188.1,398.7L190.2,391.0L190.9,398.7Z" fill="#10200a"/><path d="M186.4,398.5L188.2,393.7L189.0,398.5Z" fill="#10200a"/><path d="M185.1,398.3L187.8,390.7L187.7,398.3Z" fill="#15290c"/><path d="M183.5,398.2L185.0,393.6L186.2,398.2Z" fill="#22401a"/><path d="M182.5,398.0L185.0,390.2L184.9,398.0Z" fill="#15290c"/><path d="M181.1,398.0L181.4,392.3L184.0,398.0Z" fill="#1a3310"/><path d="M180.2,398.1L181.0,387.4L182.6,398.1Z" fill="#2a4c1c"/><path d="M178.6,398.2L181.0,388.3L180.6,398.2Z" fill="#1c3612"/><path d="M177.7,398.2L179.5,392.8L180.0,398.2Z" fill="#1a3310"/><path d="M176.2,398.2L176.9,387.8L178.7,398.2Z" fill="#1a3310"/><path d="M174.6,398.3L175.9,389.4L176.5,398.3Z" fill="#1c3612"/><path d="M173.6,398.4L175.2,387.4L175.5,398.4Z" fill="#15290c"/><path d="M172.4,398.4L172.3,389.0L174.5,398.4Z" fill="#1c3612"/><path d="M170.5,398.5L172.7,389.9L173.6,398.5Z" fill="#1a3310"/><path d="M169.4,398.5L171.5,388.1L171.5,398.5Z" fill="#3a6420"/><path d="M169.0,398.5L168.7,393.3L171.2,398.5Z" fill="#10200a"/><path d="M167.6,398.6L167.9,388.9L169.4,398.6Z" fill="#1c3612"/><path d="M165.8,398.7L166.3,393.7L168.7,398.7Z" fill="#2a4c1c"/><path d="M165.2,398.7L167.2,388.5L166.9,398.7Z" fill="#1a3310"/><path d="M162.7,398.8L163.7,392.7L165.3,398.8Z" fill="#2a4c1c"/><path d="M161.3,398.8L162.9,388.8L163.4,398.8Z" fill="#22401a"/><path d="M160.0,398.9L161.0,387.7L163.1,398.9Z" fill="#2a4c1c"/><path d="M159.7,398.9L161.8,389.2L161.6,398.9Z" fill="#3a6420"/><path d="M156.7,399.0L158.8,388.7L159.8,399.0Z" fill="#1a3310"/><path d="M156.2,399.0L156.7,390.4L159.0,399.0Z" fill="#1a3310"/><path d="M154.5,399.1L156.0,392.6L156.4,399.1Z" fill="#15290c"/><path d="M153.2,399.2L152.7,389.5L155.0,399.2Z" fill="#1c3612"/><path d="M152.0,399.2L152.6,393.8L154.6,399.2Z" fill="#1c3612"/><path d="M151.2,399.3L153.4,388.2L152.9,399.3Z" fill="#2a4c1c"/><path d="M150.0,399.3L151.8,388.3L152.6,399.3Z" fill="#22401a"/><path d="M148.1,399.4L149.6,391.0L149.8,399.4Z" fill="#2a4c1c"/><path d="M147.5,399.4L148.4,393.6L149.2,399.4Z" fill="#22401a"/><path d="M145.5,399.5L147.8,392.2L147.7,399.5Z" fill="#1a3310"/><path d="M144.6,399.6L146.3,392.7L146.5,399.6Z" fill="#2a4c1c"/><path d="M142.6,399.9L144.5,391.7L145.4,399.9Z" fill="#10200a"/><path d="M140.9,400.3L142.8,392.8L144.0,400.3Z" fill="#2a4c1c"/><path d="M140.2,400.4L141.3,395.7L143.2,400.4Z" fill="#3a6420"/><path d="M138.2,400.9L138.8,393.9L140.6,400.9Z" fill="#2a4c1c"/><path d="M136.8,401.2L138.1,394.2L139.7,401.2Z" fill="#10200a"/><path d="M136.5,401.3L136.4,392.5L138.7,401.3Z" fill="#10200a"/><path d="M135.2,401.6L135.0,390.6L137.7,401.6Z" fill="#10200a"/><path d="M134.1,401.9L135.6,393.2L136.0,401.9Z" fill="#3a6420"/><path d="M132.5,402.2L135.3,394.0L135.2,402.2Z" fill="#3a6420"/><path d="M131.2,402.5L132.6,392.5L132.9,402.5Z" fill="#10200a"/><path d="M129.9,402.8L129.4,396.1L131.6,402.8Z" fill="#3a6420"/><path d="M128.2,403.0L130.9,398.0L131.1,403.0Z" fill="#22401a"/><path d="M127.0,402.9L126.7,394.0L129.3,402.9Z" fill="#1a3310"/><path d="M125.8,402.8L125.9,398.3L128.6,402.8Z" fill="#1a3310"/><path d="M124.4,402.6L126.5,393.3L126.1,402.6Z" fill="#10200a"/><path d="M123.0,402.6L123.6,393.3L125.6,402.6Z" fill="#22401a"/><path d="M122.0,402.5L121.8,392.2L123.6,402.5Z" fill="#15290c"/><path d="M120.4,402.4L122.0,395.2L123.3,402.4Z" fill="#1a3310"/><path d="M118.9,402.3L121.4,393.1L122.0,402.3Z" fill="#1a3310"/><path d="M117.7,402.1L119.6,391.0L119.3,402.1Z" fill="#15290c"/><path d="M116.6,402.1L117.9,397.6L119.1,402.1Z" fill="#10200a"/><path d="M114.7,402.0L115.8,392.3L117.8,402.0Z" fill="#22401a"/><path d="M113.2,401.8L113.2,391.4L115.0,401.8Z" fill="#2a4c1c"/><path d="M111.9,401.7L113.8,395.9L113.8,401.7Z" fill="#3a6420"/><path d="M111.0,401.7L112.7,392.0L114.2,401.7Z" fill="#1a3310"/><path d="M109.7,401.5L109.4,395.0L111.5,401.5Z" fill="#1a3310"/><path d="M108.2,401.2L109.8,390.7L110.4,401.2Z" fill="#15290c"/><path d="M107.1,400.9L108.1,392.6L110.1,400.9Z" fill="#22401a"/><path d="M105.7,400.3L106.0,391.8L108.4,400.3Z" fill="#2a4c1c"/><path d="M104.7,399.8L104.3,393.5L106.9,399.8Z" fill="#15290c"/><path d="M102.7,399.1L103.3,390.2L105.3,399.1Z" fill="#1c3612"/><path d="M102.1,398.9L103.5,389.9L105.1,398.9Z" fill="#1c3612"/><path d="M100.6,398.1L102.0,390.7L102.4,398.1Z" fill="#10200a"/><path d="M99.3,397.6L100.3,387.7L101.1,397.6Z" fill="#1c3612"/><path d="M97.7,397.1L100.3,388.8L100.5,397.1Z" fill="#3a6420"/><path d="M96.9,396.7L97.8,392.3L99.4,396.7Z" fill="#2a4c1c"/><path d="M96.2,396.4L98.4,391.9L98.2,396.4Z" fill="#2a4c1c"/><path d="M94.6,395.8L94.8,386.4L96.8,395.8Z" fill="#3a6420"/><path d="M93.4,395.2L94.3,385.6L95.2,395.2Z" fill="#10200a"/><path d="M92.0,394.7L94.4,387.4L94.7,394.7Z" fill="#3a6420"/><path d="M90.1,393.7L90.4,385.3L92.9,393.7Z" fill="#15290c"/><path d="M89.9,393.6L92.7,383.5L92.6,393.6Z" fill="#1a3310"/><path d="M88.6,392.7L90.2,382.7L90.3,392.7Z" fill="#15290c"/><path d="M88.2,392.5L88.2,386.0L89.9,392.5Z" fill="#3a6420"/><path d="M86.4,391.8L86.2,384.6L88.7,391.8Z" fill="#1a3310"/><path d="M85.2,391.2L87.4,382.6L87.6,391.2Z" fill="#3a6420"/><path d="M83.5,390.4L84.3,382.6L86.0,390.4Z" fill="#22401a"/><path d="M82.5,390.0L84.0,381.7L85.5,390.0Z" fill="#22401a"/><path d="M81.0,389.0L83.0,383.5L83.2,389.0Z" fill="#1c3612"/><path d="M80.2,388.7L81.5,381.5L82.8,388.7Z" fill="#15290c"/><path d="M79.2,388.2L79.7,382.6L81.6,388.2Z" fill="#15290c"/><path d="M78.1,387.7L78.3,381.3L80.9,387.7Z" fill="#15290c"/><path d="M77.2,387.0L78.6,380.8L78.9,387.0Z" fill="#22401a"/><path d="M75.6,386.6L75.7,381.4L78.6,386.6Z" fill="#10200a"/><path d="M75.1,386.0L76.1,378.1L76.9,386.0Z" fill="#2a4c1c"/><path d="M73.3,385.4L74.9,380.8L76.4,385.4Z" fill="#22401a"/><path d="M72.5,384.0L74.0,377.3L74.1,384.0Z" fill="#1a3310"/><path d="M71.1,382.9L72.4,374.2L73.0,382.9Z" fill="#22401a"/><path d="M69.5,381.9L71.3,377.3L72.4,381.9Z" fill="#3a6420"/><path d="M68.9,381.2L70.3,373.5L71.5,381.2Z" fill="#15290c"/><path d="M67.9,380.1L69.3,374.6L70.2,380.1Z" fill="#15290c"/><path d="M67.5,379.5L68.4,375.1L69.2,379.5Z" fill="#2a4c1c"/><path d="M65.7,378.3L66.0,370.3L68.3,378.3Z" fill="#2a4c1c"/><path d="M64.8,377.4L66.8,369.1L67.3,377.4Z" fill="#10200a"/><path d="M63.8,376.6L66.1,372.2L66.4,376.6Z" fill="#3a6420"/><path d="M62.7,375.5L65.0,369.5L65.0,375.5Z" fill="#1a3310"/><path d="M61.5,374.7L63.9,369.8L64.4,374.7Z" fill="#22401a"/><path d="M61.0,370.6L68.2,366.3L61.0,372.7Z" fill="#2a4c1c"/><path d="M61.0,368.6L66.7,366.4L61.0,370.0Z" fill="#10200a"/><path d="M217.0,362.2L222.4,360.6L217.0,364.5Z" fill="#10200a"/><path d="M217.0,359.7L221.0,355.8L217.0,361.1Z" fill="#1c3612"/><path d="M217.0,357.9L222.5,354.2L217.0,359.2Z" fill="#1c3612"/><path d="M217.0,354.4L222.3,352.1L217.0,356.1Z" fill="#22401a"/><path d="M217.0,352.3L223.7,349.3L217.0,354.0Z" fill="#1c3612"/><path d="M217.0,350.5L224.5,347.1L217.0,352.3Z" fill="#22401a"/><path d="M217.0,347.6L223.3,343.7L217.0,349.8Z" fill="#22401a"/><path d="M217.0,345.1L221.4,342.3L217.0,347.5Z" fill="#1c3612"/><path d="M217.0,343.0L223.4,341.8L217.0,345.0Z" fill="#22401a"/><path d="M217.0,340.8L221.3,338.8L217.0,342.0Z" fill="#2a4c1c"/><path d="M217.0,339.6L221.8,338.0L217.0,340.9Z" fill="#10200a"/><path d="M216.4,340.5L218.0,329.5L218.6,340.5Z" fill="#1c3612"/><path d="M214.6,340.4L217.1,331.7L217.7,340.4Z" fill="#1a3310"/><path d="M213.6,340.4L216.4,335.8L216.6,340.4Z" fill="#2a4c1c"/><path d="M212.8,340.3L214.1,335.6L215.3,340.3Z" fill="#15290c"/><path d="M211.1,340.3L212.7,331.1L213.3,340.3Z" fill="#15290c"/><path d="M210.5,340.3L212.1,333.8L212.7,340.3Z" fill="#22401a"/><path d="M208.2,340.2L208.3,332.1L211.0,340.2Z" fill="#10200a"/><path d="M207.0,340.1L208.5,330.6L209.5,340.1Z" fill="#1c3612"/><path d="M205.1,340.1L205.4,333.6L207.6,340.1Z" fill="#22401a"/><path d="M204.4,340.0L204.3,333.7L206.6,340.0Z" fill="#10200a"/><path d="M203.4,340.0L204.3,333.1L205.1,340.0Z" fill="#1c3612"/><path d="M201.1,339.9L203.0,329.7L203.6,339.9Z" fill="#22401a"/><path d="M200.0,339.9L202.8,330.0L202.9,339.9Z" fill="#22401a"/><path d="M198.4,339.8L199.9,329.1L201.4,339.8Z" fill="#1c3612"/><path d="M197.8,339.8L199.9,330.9L201.0,339.8Z" fill="#15290c"/><path d="M196.0,339.7L197.2,332.4L198.1,339.7Z" fill="#1a3310"/><path d="M194.8,339.7L196.2,333.5L196.5,339.7Z" fill="#3a6420"/><path d="M194.0,339.7L194.4,331.3L195.9,339.7Z" fill="#15290c"/><path d="M191.3,339.6L193.4,333.2L194.4,339.6Z" fill="#15290c"/><path d="M190.6,339.6L193.2,333.7L193.4,339.6Z" fill="#15290c"/><path d="M189.6,339.5L190.6,329.2L192.5,339.5Z" fill="#3a6420"/><path d="M188.5,339.5L190.3,328.6L191.2,339.5Z" fill="#2a4c1c"/><path d="M187.1,339.5L189.7,329.0L190.2,339.5Z" fill="#1c3612"/><path d="M184.9,339.4L187.7,331.5L188.1,339.4Z" fill="#3a6420"/><path d="M184.2,339.4L185.7,333.6L187.0,339.4Z" fill="#22401a"/><path d="M183.5,339.4L185.3,330.8L185.2,339.4Z" fill="#22401a"/><path d="M181.0,339.3L183.2,334.6L183.2,339.3Z" fill="#3a6420"/><path d="M180.4,339.3L181.6,328.0L183.1,339.3Z" fill="#1a3310"/><path d="M179.6,339.3L179.5,330.1L181.8,339.3Z" fill="#1c3612"/><path d="M177.3,339.2L177.7,332.9L179.8,339.2Z" fill="#22401a"/><path d="M175.8,339.2L176.5,332.3L177.7,339.2Z" fill="#22401a"/><path d="M174.2,339.1L175.1,332.0L177.2,339.1Z" fill="#15290c"/><path d="M173.2,339.1L175.5,327.8L175.9,339.1Z" fill="#1a3310"/><path d="M172.5,339.1L173.3,332.9L174.8,339.1Z" fill="#15290c"/><path d="M170.4,339.0L170.1,329.4L172.8,339.0Z" fill="#22401a"/><path d="M169.2,339.0L170.7,327.6L172.1,339.0Z" fill="#1a3310"/><path d="M168.6,339.0L170.7,331.1L170.6,339.0Z" fill="#10200a"/><path d="M167.3,339.0L169.1,329.6L169.0,339.0Z" fill="#22401a"/><path d="M164.8,338.9L165.5,333.7L167.6,338.9Z" fill="#1c3612"/><path d="M164.2,338.9L163.8,327.9L166.3,338.9Z" fill="#10200a"/><path d="M162.9,338.9L164.4,329.6L165.5,338.9Z" fill="#1a3310"/><path d="M161.0,338.8L162.0,333.1L163.9,338.8Z" fill="#1a3310"/><path d="M160.2,338.8L160.1,328.9L162.5,338.8Z" fill="#2a4c1c"/><path d="M159.4,338.8L159.3,329.8L161.2,338.8Z" fill="#3a6420"/><path d="M156.8,338.7L157.8,331.3L159.4,338.7Z" fill="#10200a"/><path d="M156.8,338.7L158.4,331.8L158.9,338.7Z" fill="#1a3310"/><path d="M155.3,338.7L156.1,329.6L157.3,338.7Z" fill="#3a6420"/><path d="M152.9,338.6L153.9,328.9L155.3,338.6Z" fill="#15290c"/><path d="M152.4,338.6L154.2,333.9L155.1,338.6Z" fill="#1a3310"/><path d="M150.8,338.5L150.5,333.5L152.7,338.5Z" fill="#10200a"/><path d="M149.2,338.5L150.9,330.7L150.9,338.5Z" fill="#2a4c1c"/><path d="M148.0,338.6L148.0,333.5L150.0,338.6Z" fill="#1a3310"/><path d="M146.5,338.7L148.2,331.5L148.5,338.7Z" fill="#22401a"/><path d="M145.1,338.8L145.2,333.4L148.1,338.8Z" fill="#1a3310"/><path d="M144.1,338.8L145.5,328.0L147.1,338.8Z" fill="#3a6420"/><path d="M142.9,339.0L145.5,332.6L145.3,339.0Z" fill="#1a3310"/><path d="M141.6,339.1L143.5,330.4L144.0,339.1Z" fill="#2a4c1c"/><path d="M140.4,339.1L142.9,330.2L142.9,339.1Z" fill="#22401a"/><path d="M139.0,339.3L139.8,329.1L141.4,339.3Z" fill="#1c3612"/><path d="M138.2,339.3L140.2,334.8L140.6,339.3Z" fill="#15290c"/><path d="M137.0,339.4L139.1,331.7L138.7,339.4Z" fill="#3a6420"/><path d="M135.5,335.8L141.0,333.3L135.5,337.1Z" fill="#15290c"/><path d="M135.5,331.2L140.2,326.6L135.5,333.1Z" fill="#22401a"/><path d="M0.9,69.5L1.8,73.0L3.3,69.5Z" fill="#36601e"/><path d="M3.2,69.5L4.4,72.7L5.5,69.5Z" fill="#3f6a22"/><path d="M7.8,69.5L9.3,74.6L9.6,69.5Z" fill="#2c5020"/><path d="M9.6,69.5L9.9,75.1L11.2,69.5Z" fill="#36601e"/><path d="M12.7,70.4L13.1,74.0L15.0,70.4Z" fill="#1c3612"/><path d="M14.7,71.2L16.6,76.7L16.2,71.2Z" fill="#2c5020"/><path d="M17.1,73.1L17.6,76.1L19.5,73.1Z" fill="#22401a"/><path d="M18.0,74.9L19.7,77.2L20.0,74.9Z" fill="#36601e"/><path d="M19.7,79.5L20.6,82.1L22.3,79.5Z" fill="#22401a"/><path d="M20.4,79.6L21.1,84.6L21.9,79.6Z" fill="#22401a"/><path d="M24.8,81.4L24.6,85.0L26.7,81.4Z" fill="#22401a"/><path d="M26.1,81.6L28.1,87.5L27.8,81.6Z" fill="#22401a"/><path d="M28.6,81.9L30.8,87.2L30.7,81.9Z" fill="#36601e"/><path d="M30.6,82.1L31.2,88.0L33.3,82.1Z" fill="#1c3612"/><path d="M34.6,82.4L35.3,87.1L36.1,82.4Z" fill="#2c5020"/><path d="M35.0,82.9L35.6,86.9L37.6,82.9Z" fill="#1c3612"/><path d="M37.1,85.0L38.6,88.2L38.6,85.0Z" fill="#3f6a22"/><path d="M106.6,158.3L106.2,162.9L108.0,158.3Z" fill="#36601e"/><path d="M109.4,155.7L110.1,158.7L111.9,155.7Z" fill="#36601e"/><path d="M110.2,155.0L112.7,159.2L112.9,155.0Z" fill="#1c3612"/><path d="M112.4,153.4L114.3,157.6L114.8,153.4Z" fill="#22401a"/><path d="M115.6,151.0L117.1,154.5L117.8,151.0Z" fill="#2c5020"/><path d="M118.7,148.8L120.0,152.6L120.4,148.8Z" fill="#2c5020"/><path d="M121.1,148.1L122.3,151.8L122.5,148.1Z" fill="#3f6a22"/><path d="M122.4,147.9L122.5,152.9L124.1,147.9Z" fill="#2c5020"/><path d="M124.5,147.3L126.0,151.7L127.1,147.3Z" fill="#3f6a22"/><path d="M126.9,146.9L128.7,151.5L128.9,146.9Z" fill="#3f6a22"/><path d="M129.8,146.3L130.6,149.3L132.1,146.3Z" fill="#22401a"/><path d="M133.8,145.6L135.0,150.4L135.7,145.6Z" fill="#2c5020"/><path d="M135.7,145.1L136.5,150.0L137.9,145.1Z" fill="#3f6a22"/><path d="M138.4,144.7L138.7,149.9L140.0,144.7Z" fill="#36601e"/><path d="M140.6,144.7L140.7,148.0L142.8,144.7Z" fill="#22401a"/><path d="M142.4,144.8L142.4,147.9L143.9,144.8Z" fill="#1c3612"/><path d="M145.7,145.1L146.9,150.6L148.0,145.1Z" fill="#3f6a22"/><path d="M147.6,145.3L147.7,149.4L149.8,145.3Z" fill="#22401a"/><path d="M151.1,145.7L152.3,151.4L153.7,145.7Z" fill="#1c3612"/><path d="M153.0,145.8L155.1,151.1L155.6,145.8Z" fill="#1c3612"/><path d="M157.3,145.9L157.0,149.6L158.8,145.9Z" fill="#2c5020"/><path d="M157.6,145.8L157.7,149.4L159.8,145.8Z" fill="#22401a"/><path d="M161.3,145.5L161.7,149.1L163.4,145.5Z" fill="#22401a"/><path d="M163.7,145.4L165.5,150.0L166.1,145.4Z" fill="#3f6a22"/><path d="M165.7,145.2L167.8,149.6L168.1,145.2Z" fill="#22401a"/><path d="M169.4,145.0L170.9,149.6L171.5,145.0Z" fill="#3f6a22"/><path d="M172.5,144.8L173.1,149.1L174.4,144.8Z" fill="#2c5020"/><path d="M174.5,144.6L176.4,148.8L176.8,144.6Z" fill="#2c5020"/><path d="M176.7,144.5L178.2,149.1L178.4,144.5Z" fill="#2c5020"/><path d="M178.0,144.3L178.2,148.7L180.8,144.3Z" fill="#1c3612"/><path d="M182.4,144.0L184.6,148.8L184.5,144.0Z" fill="#2c5020"/><path d="M182.7,144.0L183.1,150.0L184.4,144.0Z" fill="#2c5020"/><path d="M187.2,143.7L188.5,148.2L189.4,143.7Z" fill="#1c3612"/><path d="M187.8,143.7L188.3,147.7L189.4,143.7Z" fill="#3f6a22"/><path d="M190.7,143.2L191.8,146.7L192.5,143.2Z" fill="#3f6a22"/><path d="M194.6,141.1L196.5,145.9L197.0,141.1Z" fill="#22401a"/><path d="M196.0,140.4L198.0,145.6L198.4,140.4Z" fill="#1c3612"/><path d="M198.8,139.0L200.2,142.7L201.2,139.0Z" fill="#1c3612"/><path d="M202.0,137.5L203.9,142.8L203.9,137.5Z" fill="#36601e"/><path d="M203.2,136.7L203.9,141.9L205.9,136.7Z" fill="#3f6a22"/><path d="M206.3,133.8L206.3,137.1L208.5,133.8Z" fill="#3f6a22"/><path d="M206.8,133.5L207.6,136.7L208.4,133.5Z" fill="#22401a"/><path d="M207.8,130.9L210.4,134.3L210.6,130.9Z" fill="#3f6a22"/><path d="M210.4,127.5L212.1,130.0L212.4,127.5Z" fill="#22401a"/><path d="M209.2,86.4L209.2,89.5L211.4,86.4Z" fill="#36601e"/><path d="M212.2,85.2L213.6,89.2L214.2,85.2Z" fill="#22401a"/><path d="M215.2,84.0L216.4,87.5L217.2,84.0Z" fill="#3f6a22"/><path d="M218.2,82.9L218.0,87.8L219.9,82.9Z" fill="#36601e"/><path d="M220.0,82.5L221.2,88.3L221.6,82.5Z" fill="#36601e"/><path d="M222.5,82.5L223.8,86.1L224.4,82.5Z" fill="#2c5020"/><path d="M224.1,82.5L226.1,86.5L226.7,82.5Z" fill="#3f6a22"/><path d="M226.6,82.5L227.1,85.6L229.1,82.5Z" fill="#2c5020"/><path d="M229.6,82.5L231.0,87.7L231.2,82.5Z" fill="#22401a"/><path d="M233.6,82.5L235.6,88.3L236.2,82.5Z" fill="#1c3612"/><path d="M234.8,83.0L235.6,87.7L236.6,83.0Z" fill="#2c5020"/><path d="M236.6,84.1L237.5,88.2L238.3,84.1Z" fill="#2c5020"/><path d="M238.7,85.9L240.6,90.2L241.5,85.9Z" fill="#1c3612"/><path d="M230.9,106.1L231.4,111.8L233.0,106.1Z" fill="#1c3612"/><path d="M233.1,106.4L233.1,111.8L235.3,106.4Z" fill="#1c3612"/><path d="M235.0,106.7L237.2,111.7L237.3,106.7Z" fill="#2c5020"/><path d="M239.4,107.4L241.0,110.4L242.0,107.4Z" fill="#22401a"/><path d="M242.3,107.7L244.4,112.2L244.6,107.7Z" fill="#36601e"/><path d="M244.8,108.1L245.7,112.6L246.5,108.1Z" fill="#36601e"/><path d="M246.7,108.3L248.4,113.4L248.1,108.3Z" fill="#2c5020"/><path d="M248.5,108.6L249.0,112.7L250.1,108.6Z" fill="#2c5020"/><path d="M250.5,108.9L253.0,112.8L253.3,108.9Z" fill="#2c5020"/><path d="M254.2,109.4L256.5,114.3L256.8,109.4Z" fill="#1c3612"/><path d="M257.5,109.4L258.0,115.3L259.2,109.4Z" fill="#36601e"/><path d="M259.2,109.4L261.2,112.6L261.1,109.4Z" fill="#3f6a22"/><path d="M262.2,109.3L263.4,114.4L264.2,109.3Z" fill="#36601e"/><path d="M265.0,109.2L266.0,114.9L266.9,109.2Z" fill="#22401a"/><path d="M266.5,109.2L266.9,113.9L268.8,109.2Z" fill="#22401a"/><path d="M268.2,109.1L268.4,114.2L270.3,109.1Z" fill="#22401a"/><path d="M271.8,109.0L271.6,113.7L273.5,109.0Z" fill="#3f6a22"/><path d="M274.9,108.9L276.8,112.3L276.8,108.9Z" fill="#1c3612"/><path d="M276.9,108.9L277.7,114.5L278.9,108.9Z" fill="#36601e"/><path d="M279.2,108.8L280.9,114.3L281.5,108.8Z" fill="#22401a"/><path d="M282.1,108.7L283.6,112.0L283.8,108.7Z" fill="#3f6a22"/><path d="M283.9,108.7L285.3,113.5L286.2,108.7Z" fill="#22401a"/><path d="M286.5,108.6L287.7,112.7L288.9,108.6Z" fill="#3f6a22"/><path d="M289.5,108.5L289.9,112.9L291.8,108.5Z" fill="#36601e"/><path d="M291.1,109.2L290.9,112.3L292.8,109.2Z" fill="#1c3612"/><path d="M294.0,111.4L295.3,116.4L295.7,111.4Z" fill="#22401a"/><path d="M295.2,112.6L297.7,115.5L297.9,112.6Z" fill="#3f6a22"/><path d="M297.0,113.7L297.4,117.2L299.0,113.7Z" fill="#36601e"/><path d="M299.3,115.7L301.1,119.8L301.8,115.7Z" fill="#36601e"/><path d="M301.2,116.6L302.4,121.5L303.5,116.6Z" fill="#1c3612"/><path d="M303.1,117.5L303.2,121.6L305.6,117.5Z" fill="#22401a"/><path d="M305.3,118.5L306.7,122.5L307.8,118.5Z" fill="#3f6a22"/><path d="M308.5,119.8L309.1,125.3L310.1,119.8Z" fill="#2c5020"/><path d="M310.7,120.8L311.0,124.4L312.3,120.8Z" fill="#1c3612"/><path d="M312.7,120.8L314.1,126.4L314.7,120.8Z" fill="#1c3612"/><path d="M315.1,120.4L317.4,123.7L317.6,120.4Z" fill="#3f6a22"/><path d="M316.3,120.2L316.6,124.5L318.4,120.2Z" fill="#3f6a22"/><path d="M320.4,119.6L320.8,125.3L323.1,119.6Z" fill="#2c5020"/><path d="M322.5,119.3L324.3,125.0L325.0,119.3Z" fill="#1c3612"/><path d="M323.6,119.2L323.7,124.3L325.9,119.2Z" fill="#36601e"/><path d="M327.7,118.6L328.0,124.5L329.9,118.6Z" fill="#3f6a22"/><path d="M331.1,102.6L332.6,106.0L333.8,102.6Z" fill="#22401a"/><path d="M332.2,100.9L332.4,103.3L334.7,100.9Z" fill="#2c5020"/><path d="M333.9,98.3L335.2,101.7L335.9,98.3Z" fill="#1c3612"/><path d="M336.2,94.7L337.5,98.4L337.6,94.7Z" fill="#1c3612"/><path d="M337.1,94.6L337.0,100.1L339.2,94.6Z" fill="#36601e"/><path d="M339.1,94.7L339.9,99.4L341.1,94.7Z" fill="#1c3612"/><path d="M342.2,94.9L343.0,97.9L344.8,94.9Z" fill="#3f6a22"/><path d="M345.7,95.1L345.5,98.7L347.4,95.1Z" fill="#2c5020"/><path d="M345.9,95.1L347.9,100.7L348.3,95.1Z" fill="#2c5020"/><path d="M349.6,95.3L351.5,98.6L351.1,95.3Z" fill="#22401a"/><path d="M352.5,95.5L353.9,100.3L354.9,95.5Z" fill="#3f6a22"/><path d="M353.8,95.6L356.0,99.9L356.0,95.6Z" fill="#1c3612"/><path d="M357.6,95.8L359.7,99.8L360.2,95.8Z" fill="#36601e"/><path d="M360.6,96.0L360.7,99.2L362.6,96.0Z" fill="#2c5020"/><path d="M362.0,96.2L362.1,100.4L363.7,96.2Z" fill="#1c3612"/><path d="M363.6,96.8L365.9,101.8L365.9,96.8Z" fill="#36601e"/><path d="M367.6,98.0L369.3,102.7L370.1,98.0Z" fill="#36601e"/><path d="M370.0,98.6L372.2,102.5L372.1,98.6Z" fill="#2c5020"/><path d="M373.3,99.6L374.9,104.3L375.4,99.6Z" fill="#36601e"/><path d="M374.6,100.0L376.2,103.4L376.9,100.0Z" fill="#22401a"/><path d="M375.9,100.3L376.1,103.3L378.1,100.3Z" fill="#22401a"/><path d="M380.5,101.6L381.1,107.5L382.5,101.6Z" fill="#3f6a22"/><path d="M382.9,102.4L384.5,105.9L385.2,102.4Z" fill="#2c5020"/><path d="M384.6,104.2L385.3,107.1L386.7,104.2Z" fill="#1c3612"/><path d="M385.2,105.0L386.3,107.9L387.1,105.0Z" fill="#1c3612"/><path d="M387.5,108.7L389.8,111.4L390.0,108.7Z" fill="#36601e"/><path d="M389.2,111.1L390.3,114.8L391.5,111.1Z" fill="#36601e"/><path d="M390.9,113.3L392.5,116.5L392.8,113.3Z" fill="#36601e"/><path d="M85.3,200.6L86.5,203.1L87.4,200.6Z" fill="#2c5020"/><path d="M86.1,199.4L86.8,201.8L88.3,199.4Z" fill="#2c5020"/><path d="M86.7,198.4L87.6,201.0L89.2,198.4Z" fill="#36601e"/><path d="M89.1,195.2L89.9,199.1L91.3,195.2Z" fill="#3f6a22"/><path d="M90.0,194.3L91.7,198.0L91.8,194.3Z" fill="#1c3612"/><path d="M91.2,192.0L92.2,194.5L93.8,192.0Z" fill="#2c5020"/><path d="M93.1,190.1L94.6,193.0L94.7,190.1Z" fill="#22401a"/><path d="M96.6,187.4L97.2,191.5L98.0,187.4Z" fill="#3f6a22"/><path d="M96.8,187.2L98.8,190.9L98.9,187.2Z" fill="#2c5020"/><path d="M100.6,185.3L102.7,188.5L103.2,185.3Z" fill="#3f6a22"/><path d="M103.0,184.2L104.1,187.4L105.4,184.2Z" fill="#3f6a22"/><path d="M104.6,183.7L106.1,187.4L106.0,183.7Z" fill="#1c3612"/><path d="M107.6,182.3L109.0,187.6L109.1,182.3Z" fill="#2c5020"/><path d="M330.9,168.6L331.3,171.7L333.2,168.6Z" fill="#22401a"/><path d="M332.6,171.5L333.3,174.0L334.4,171.5Z" fill="#1c3612"/><path d="M334.1,174.2L335.9,176.6L335.6,174.2Z" fill="#3f6a22"/><path d="M335.4,177.3L336.0,179.7L337.3,177.3Z" fill="#22401a"/><path d="M337.5,180.7L337.8,184.5L339.7,180.7Z" fill="#2c5020"/><path d="M338.7,182.3L338.8,185.2L340.7,182.3Z" fill="#36601e"/><path d="M340.9,185.3L340.8,187.7L342.8,185.3Z" fill="#36601e"/><path d="M341.3,185.7L343.2,190.2L343.5,185.7Z" fill="#36601e"/><path d="M344.4,187.1L346.1,190.8L346.9,187.1Z" fill="#3f6a22"/><path d="M345.4,187.6L346.8,193.0L347.9,187.6Z" fill="#1c3612"/><path d="M349.6,189.3L350.5,194.7L351.6,189.3Z" fill="#36601e"/><path d="M351.3,190.0L353.0,195.4L352.9,190.0Z" fill="#2c5020"/><path d="M354.1,191.4L355.7,195.4L356.5,191.4Z" fill="#2c5020"/><path d="M355.5,192.0L356.2,194.9L357.6,192.0Z" fill="#36601e"/><path d="M358.7,193.3L359.8,197.0L360.6,193.3Z" fill="#3f6a22"/><path d="M359.0,193.6L359.8,198.7L361.5,193.6Z" fill="#1c3612"/><path d="M363.1,195.3L363.8,199.6L365.0,195.3Z" fill="#3f6a22"/><path d="M363.8,196.1L363.8,198.5L365.8,196.1Z" fill="#22401a"/><path d="M365.5,200.0L366.6,203.0L368.0,200.0Z" fill="#2c5020"/><path d="M366.5,201.9L366.7,204.3L368.8,201.9Z" fill="#3f6a22"/><path d="M368.2,205.1L368.9,207.4L370.4,205.1Z" fill="#1c3612"/><path d="M131.7,322.0L132.0,325.4L134.4,322.0Z" fill="#1c3612"/><path d="M133.9,321.4L134.8,326.1L136.5,321.4Z" fill="#1c3612"/><path d="M134.9,321.1L137.2,326.4L137.5,321.1Z" fill="#1c3612"/><path d="M139.4,320.0L139.9,324.9L141.4,320.0Z" fill="#3f6a22"/><path d="M141.3,319.4L142.0,323.0L143.6,319.4Z" fill="#3f6a22"/><path d="M144.1,318.6L146.5,323.6L146.8,318.6Z" fill="#2c5020"/><path d="M147.3,318.6L148.4,323.4L149.5,318.6Z" fill="#22401a"/><path d="M149.1,318.7L151.6,321.9L151.8,318.7Z" fill="#1c3612"/><path d="M151.6,318.8L153.4,324.3L153.5,318.8Z" fill="#1c3612"/><path d="M152.8,318.9L153.4,324.0L154.8,318.9Z" fill="#36601e"/><path d="M155.8,319.0L155.8,323.3L157.5,319.0Z" fill="#22401a"/><path d="M157.1,319.1L159.3,323.2L159.8,319.1Z" fill="#22401a"/><path d="M160.4,319.2L160.0,324.8L161.9,319.2Z" fill="#1c3612"/><path d="M162.0,319.3L164.3,324.9L164.4,319.3Z" fill="#22401a"/><path d="M164.5,319.4L165.4,324.3L166.5,319.4Z" fill="#3f6a22"/><path d="M168.9,319.6L169.7,324.5L170.9,319.6Z" fill="#36601e"/><path d="M170.0,319.7L169.8,323.3L172.0,319.7Z" fill="#36601e"/><path d="M173.5,319.8L174.3,323.5L175.6,319.8Z" fill="#3f6a22"/><path d="M175.5,319.9L176.2,323.0L177.0,319.9Z" fill="#2c5020"/><path d="M176.4,320.0L176.7,324.4L178.8,320.0Z" fill="#3f6a22"/><path d="M180.8,320.2L182.0,326.1L183.3,320.2Z" fill="#1c3612"/><path d="M182.5,320.2L183.7,325.1L184.2,320.2Z" fill="#1c3612"/><path d="M185.1,320.4L186.4,325.0L187.3,320.4Z" fill="#2c5020"/><path d="M187.2,320.4L189.2,323.5L189.2,320.4Z" fill="#3f6a22"/><path d="M189.7,320.6L191.8,324.8L192.5,320.6Z" fill="#2c5020"/><path d="M191.0,320.6L191.7,325.7L193.3,320.6Z" fill="#3f6a22"/><path d="M193.7,320.8L195.0,325.6L195.9,320.8Z" fill="#2c5020"/><path d="M197.6,320.9L197.5,325.8L199.4,320.9Z" fill="#3f6a22"/><path d="M198.3,321.0L199.4,326.3L200.0,321.0Z" fill="#2c5020"/><path d="M202.7,321.2L202.7,324.2L204.2,321.2Z" fill="#3f6a22"/><path d="M204.6,321.2L204.8,326.2L206.5,321.2Z" fill="#22401a"/><path d="M206.0,321.3L207.0,326.7L208.7,321.3Z" fill="#1c3612"/><path d="M209.6,321.5L211.7,326.3L212.2,321.5Z" fill="#36601e"/><path d="M211.9,322.2L213.3,325.8L213.9,322.2Z" fill="#22401a"/><path d="M214.2,322.9L214.4,328.2L215.7,322.9Z" fill="#1c3612"/><path d="M215.1,323.3L216.1,327.5L217.2,323.3Z" fill="#3f6a22"/><path d="M218.1,324.3L218.5,329.2L220.1,324.3Z" fill="#3f6a22"/><path d="M221.5,326.2L222.7,329.0L224.2,326.2Z" fill="#2c5020"/><path d="M224.4,327.8L226.1,332.2L225.8,327.8Z" fill="#2c5020"/><path d="M225.8,329.2L228.0,333.0L228.5,329.2Z" fill="#2c5020"/><path d="M226.9,329.6L228.0,334.4L228.7,329.6Z" fill="#36601e"/><path d="M229.7,331.8L231.2,336.4L232.2,331.8Z" fill="#22401a"/><path d="M231.1,332.8L232.1,337.2L233.9,332.8Z" fill="#1c3612"/><path d="M234.5,333.6L234.2,339.1L235.9,333.6Z" fill="#1c3612"/><path d="M236.5,333.8L237.1,337.9L238.9,333.8Z" fill="#1c3612"/><path d="M237.2,333.9L238.9,337.2L239.9,333.9Z" fill="#22401a"/><path d="M242.2,334.2L242.5,339.1L244.6,334.2Z" fill="#3f6a22"/><path d="M242.5,334.3L244.0,339.2L245.2,334.3Z" fill="#22401a"/><path d="M247.4,334.6L248.2,339.7L249.1,334.6Z" fill="#1c3612"/><path d="M249.2,334.7L249.9,340.5L251.0,334.7Z" fill="#2c5020"/><path d="M250.7,334.9L250.6,340.2L252.5,334.9Z" fill="#36601e"/><path d="M253.0,334.9L253.8,338.1L255.7,334.9Z" fill="#36601e"/><path d="M255.5,334.7L256.0,340.6L257.1,334.7Z" fill="#36601e"/><path d="M258.0,334.4L259.3,339.0L260.0,334.4Z" fill="#1c3612"/><path d="M262.9,333.9L262.7,339.0L264.5,333.9Z" fill="#3f6a22"/><path d="M265.1,333.7L265.8,339.0L266.6,333.7Z" fill="#1c3612"/><path d="M268.1,333.4L269.5,338.3L269.9,333.4Z" fill="#36601e"/><path d="M269.3,333.2L270.6,337.7L272.0,333.2Z" fill="#36601e"/><path d="M271.6,332.9L271.8,338.1L274.1,332.9Z" fill="#22401a"/><path d="M273.1,332.8L274.4,338.6L275.7,332.8Z" fill="#3f6a22"/><path d="M277.4,332.6L277.9,338.6L279.3,332.6Z" fill="#1c3612"/><path d="M280.3,332.8L281.2,338.6L281.8,332.8Z" fill="#2c5020"/><path d="M281.0,332.8L282.6,337.2L283.4,332.8Z" fill="#22401a"/><path d="M284.7,333.1L285.4,339.0L287.0,333.1Z" fill="#36601e"/><path d="M288.3,333.3L288.2,338.2L290.2,333.3Z" fill="#36601e"/><path d="M290.5,333.5L291.9,336.9L292.2,333.5Z" fill="#3f6a22"/><path d="M291.4,333.7L293.0,337.7L293.9,333.7Z" fill="#36601e"/><path d="M295.1,334.8L297.3,340.1L297.1,334.8Z" fill="#1c3612"/><path d="M297.0,335.4L298.0,339.3L299.4,335.4Z" fill="#22401a"/><path d="M300.8,335.3L302.3,340.1L302.9,335.3Z" fill="#3f6a22"/><path d="M301.3,335.1L301.5,339.6L304.0,335.1Z" fill="#22401a"/><path d="M304.4,334.0L306.0,336.9L307.0,334.0Z" fill="#22401a"/><path d="M307.6,333.0L307.4,336.2L309.3,333.0Z" fill="#2c5020"/><path d="M309.9,332.0L311.8,335.2L312.1,332.0Z" fill="#1c3612"/><path d="M312.2,331.2L314.0,334.4L314.3,331.2Z" fill="#22401a"/><path d="M312.9,331.0L314.7,334.5L314.8,331.0Z" fill="#36601e"/><path d="M315.6,330.0L315.9,335.7L317.8,330.0Z" fill="#22401a"/><path d="M319.1,328.8L319.1,333.4L321.0,328.8Z" fill="#22401a"/><path d="M321.3,328.0L321.5,331.4L323.3,328.0Z" fill="#22401a"/><path d="M324.2,327.0L325.8,330.1L325.7,327.0Z" fill="#3f6a22"/><path d="M324.7,326.7L325.0,330.0L327.3,326.7Z" fill="#1c3612"/><path d="M326.7,326.0L328.8,329.2L329.0,326.0Z" fill="#36601e"/><path d="M330.3,324.8L330.4,329.9L332.3,324.8Z" fill="#22401a"/><path d="M332.5,323.6L334.5,327.8L334.5,323.6Z" fill="#3f6a22"/><path d="M334.7,322.2L336.1,326.6L337.1,322.2Z" fill="#1c3612"/><path d="M337.1,321.0L336.8,325.8L338.9,321.0Z" fill="#22401a"/><path d="M337.9,320.2L339.6,325.6L340.7,320.2Z" fill="#3f6a22"/><path d="M341.2,318.4L341.6,322.4L343.4,318.4Z" fill="#1c3612"/><path d="M342.7,317.5L345.0,322.4L345.1,317.5Z" fill="#36601e"/><path d="M345.5,315.8L345.8,319.0L348.2,315.8Z" fill="#2c5020"/><path d="M347.7,314.8L349.4,318.9L349.6,314.8Z" fill="#36601e"/><path d="M349.0,314.0L349.6,318.9L351.7,314.0Z" fill="#1c3612"/><path d="M352.4,312.5L354.2,315.7L355.0,312.5Z" fill="#3f6a22"/><path d="M355.0,311.4L357.1,315.4L357.4,311.4Z" fill="#22401a"/><path d="M358.2,310.2L359.5,313.9L359.7,310.2Z" fill="#22401a"/><path d="M359.3,309.6L360.2,313.0L361.3,309.6Z" fill="#36601e"/><path d="M361.0,308.8L361.8,314.2L363.1,308.8Z" fill="#22401a"/><path d="M364.2,307.9L364.6,311.5L366.1,307.9Z" fill="#2c5020"/><path d="M366.0,307.8L365.9,312.9L367.5,307.8Z" fill="#36601e"/><path d="M369.0,307.8L370.9,311.3L370.9,307.8Z" fill="#3f6a22"/><path d="M370.3,307.7L372.6,313.1L373.0,307.7Z" fill="#3f6a22"/><path d="M375.3,307.6L376.9,313.2L376.8,307.6Z" fill="#36601e"/><path d="M377.2,307.6L378.1,311.2L379.3,307.6Z" fill="#1c3612"/><path d="M379.5,307.5L379.9,312.7L381.2,307.5Z" fill="#3f6a22"/><path d="M380.2,307.5L382.5,313.3L382.9,307.5Z" fill="#1c3612"/><path d="M383.0,307.4L385.0,310.6L385.8,307.4Z" fill="#3f6a22"/><path d="M384.9,307.4L386.7,312.0L387.0,307.4Z" fill="#1c3612"/><path d="M388.3,307.3L388.2,311.0L390.5,307.3Z" fill="#36601e"/><path d="M392.1,307.2L393.4,310.6L393.9,307.2Z" fill="#1c3612"/><path d="M392.4,307.2L393.1,312.2L394.0,307.2Z" fill="#3f6a22"/><path d="M396.4,307.1L398.0,310.2L398.4,307.1Z" fill="#36601e"/><path d="M59.2,359.7L60.9,364.4L61.5,359.7Z" fill="#1c3612"/><path d="M62.6,356.9L63.5,359.7L65.2,356.9Z" fill="#1c3612"/><path d="M63.6,356.2L65.1,360.6L66.0,356.2Z" fill="#3f6a22"/><path d="M67.1,353.7L68.8,358.2L68.7,353.7Z" fill="#1c3612"/><path d="M68.5,352.5L68.3,357.3L70.4,352.5Z" fill="#36601e"/><path d="M70.2,351.1L70.4,355.2L72.1,351.1Z" fill="#3f6a22"/><path d="M73.0,349.4L73.4,353.9L75.5,349.4Z" fill="#2c5020"/><path d="M74.6,349.0L76.7,352.2L76.6,349.0Z" fill="#3f6a22"/><path d="M78.5,347.6L80.3,352.5L80.9,347.6Z" fill="#2c5020"/><path d="M79.7,347.2L80.3,350.9L82.1,347.2Z" fill="#1c3612"/><path d="M82.4,346.4L84.2,350.6L84.5,346.4Z" fill="#36601e"/><path d="M85.7,345.2L86.3,350.1L87.8,345.2Z" fill="#3f6a22"/><path d="M87.2,345.1L89.6,350.1L89.6,345.1Z" fill="#1c3612"/><path d="M89.7,345.3L90.2,350.9L91.2,345.3Z" fill="#22401a"/><path d="M92.4,345.5L92.7,351.3L94.0,345.5Z" fill="#22401a"/><path d="M95.2,345.7L96.5,351.4L97.3,345.7Z" fill="#2c5020"/><path d="M97.2,345.9L98.5,351.0L99.9,345.9Z" fill="#36601e"/><path d="M100.2,346.2L100.1,351.1L102.0,346.2Z" fill="#22401a"/><path d="M103.7,346.5L104.8,351.0L105.5,346.5Z" fill="#2c5020"/><path d="M105.0,346.9L106.2,351.7L107.2,346.9Z" fill="#36601e"/><path d="M106.7,347.6L107.2,350.9L109.2,347.6Z" fill="#2c5020"/><path d="M109.2,348.4L110.9,352.4L111.0,348.4Z" fill="#22401a"/><path d="M111.8,349.4L113.7,353.6L113.5,349.4Z" fill="#3f6a22"/><path d="M113.5,350.2L115.3,355.8L116.1,350.2Z" fill="#22401a"/><path d="M115.4,350.9L117.0,354.2L118.2,350.9Z" fill="#36601e"/><path d="M118.2,351.9L118.2,355.3L120.4,351.9Z" fill="#2c5020"/><path d="M122.4,353.0L124.6,356.4L124.5,353.0Z" fill="#3f6a22"/><path d="M123.3,353.2L124.3,358.8L125.2,353.2Z" fill="#22401a"/><path d="M127.6,354.0L129.5,359.7L129.2,354.0Z" fill="#3f6a22"/><path d="M129.7,354.5L130.9,358.4L132.1,354.5Z" fill="#2c5020"/><path d="M132.0,355.0L133.8,360.2L134.8,355.0Z" fill="#3f6a22"/><path d="M134.4,355.4L134.4,361.0L136.3,355.4Z" fill="#36601e"/><path d="M137.2,355.6L137.8,359.0L139.3,355.6Z" fill="#36601e"/><path d="M139.1,355.7L139.6,359.4L141.0,355.7Z" fill="#3f6a22"/><path d="M141.7,355.9L143.6,360.6L143.5,355.9Z" fill="#2c5020"/><path d="M142.7,356.0L144.4,359.2L145.3,356.0Z" fill="#1c3612"/><path d="M147.4,356.2L148.7,360.4L149.5,356.2Z" fill="#3f6a22"/><path d="M149.9,356.3L150.0,362.1L151.8,356.3Z" fill="#36601e"/><path d="M151.0,356.4L151.6,360.5L152.8,356.4Z" fill="#36601e"/><path d="M154.5,356.6L155.6,359.9L156.9,356.6Z" fill="#36601e"/><path d="M156.7,356.8L159.1,360.6L159.3,356.8Z" fill="#36601e"/><path d="M159.0,356.9L160.6,361.1L161.6,356.9Z" fill="#22401a"/><path d="M160.2,357.0L162.7,361.4L162.8,357.0Z" fill="#1c3612"/><path d="M164.9,357.2L164.6,362.0L166.8,357.2Z" fill="#2c5020"/><path d="M165.8,357.3L167.6,361.9L168.2,357.3Z" fill="#22401a"/><path d="M168.1,357.4L169.0,362.9L169.9,357.4Z" fill="#2c5020"/><path d="M172.0,357.6L173.0,361.5L174.2,357.6Z" fill="#1c3612"/><path d="M174.6,357.8L175.8,361.2L176.4,357.8Z" fill="#36601e"/><path d="M175.4,357.8L175.5,362.8L177.2,357.8Z" fill="#22401a"/><path d="M177.5,358.0L179.7,363.3L179.6,358.0Z" fill="#3f6a22"/><path d="M181.8,358.2L183.7,363.0L184.0,358.2Z" fill="#36601e"/><path d="M185.0,358.4L186.5,363.9L186.9,358.4Z" fill="#1c3612"/><path d="M187.4,358.6L187.7,362.0L188.9,358.6Z" fill="#22401a"/><path d="M188.4,358.6L189.7,361.8L190.3,358.6Z" fill="#2c5020"/><path d="M190.0,358.7L190.1,362.6L192.3,358.7Z" fill="#22401a"/><path d="M194.6,359.0L196.0,362.5L196.2,359.0Z" fill="#3f6a22"/><path d="M195.5,359.1L197.5,363.0L198.1,359.1Z" fill="#2c5020"/><path d="M199.4,359.3L200.4,364.4L201.0,359.3Z" fill="#22401a"/><path d="M200.1,359.3L201.0,363.9L202.0,359.3Z" fill="#2c5020"/><path d="M204.6,358.3L205.5,361.5L206.3,358.3Z" fill="#22401a"/><path d="M206.2,357.2L208.4,361.4L208.5,357.2Z" fill="#3f6a22"/><path d="M208.1,356.0L209.1,360.6L210.6,356.0Z" fill="#1c3612"/><path d="M209.5,355.5L209.8,358.6L210.9,355.5Z" fill="#2c5020"/><path d="M211.0,354.2L212.4,358.1L213.8,354.2Z" fill="#2c5020"/><path d="M213.4,352.9L213.7,356.4L215.8,352.9Z" fill="#22401a"/><path d="M217.3,350.7L217.3,353.8L219.1,350.7Z" fill="#22401a"/><path d="M185.9,419.2L186.2,423.1L188.3,419.2Z" fill="#1c3612"/><path d="M188.1,418.2L187.9,423.0L189.5,418.2Z" fill="#3f6a22"/><path d="M189.2,417.2L189.5,421.2L191.9,417.2Z" fill="#2c5020"/><path d="M191.6,415.8L193.9,420.5L194.1,415.8Z" fill="#22401a"/><path d="M193.7,414.6L193.7,417.9L196.0,414.6Z" fill="#22401a"/><path d="M196.2,413.0L197.2,418.2L198.9,413.0Z" fill="#22401a"/><path d="M198.6,411.7L199.7,416.5L200.8,411.7Z" fill="#1c3612"/><path d="M199.5,411.4L199.6,415.8L200.9,411.4Z" fill="#22401a"/><path d="M203.4,409.2L203.4,412.5L205.8,409.2Z" fill="#1c3612"/><path d="M205.5,408.1L206.8,413.4L208.1,408.1Z" fill="#3f6a22"/><path d="M206.7,407.8L208.2,412.4L208.2,407.8Z" fill="#36601e"/><path d="M209.3,406.3L211.0,410.6L211.3,406.3Z" fill="#2c5020"/><path d="M211.2,405.5L212.6,408.7L212.8,405.5Z" fill="#2c5020"/><path d="M214.7,403.7L214.7,406.6L216.6,403.7Z" fill="#2c5020"/><path d="M217.2,402.3L219.2,407.1L219.6,402.3Z" fill="#22401a"/><path d="M230.9,407.3L231.5,410.8L233.5,407.3Z" fill="#1c3612"/><path d="M233.9,409.3L234.9,414.1L236.6,409.3Z" fill="#1c3612"/><path d="M237.0,411.0L237.6,415.0L238.5,411.0Z" fill="#1c3612"/><path d="M236.8,411.2L239.2,414.9L239.2,411.2Z" fill="#22401a"/><path d="M239.2,412.6L240.4,418.0L241.1,412.6Z" fill="#36601e"/><path d="M241.5,413.8L242.2,418.9L243.9,413.8Z" fill="#3f6a22"/><path d="M245.0,415.6L247.3,420.5L247.5,415.6Z" fill="#2c5020"/><path d="M247.4,416.7L248.3,421.1L249.3,416.7Z" fill="#2c5020"/><path d="M249.2,417.5L249.9,421.5L250.7,417.5Z" fill="#22401a"/><path d="M252.6,419.3L252.3,422.4L254.2,419.3Z" fill="#1c3612"/><path d="M254.5,420.3L255.5,423.2L256.1,420.3Z" fill="#2c5020"/><path d="M256.0,421.1L255.7,425.5L257.5,421.1Z" fill="#3f6a22"/><path d="M259.4,423.0L260.7,427.9L261.1,423.0Z" fill="#36601e"/><path d="M260.6,423.9L262.0,428.2L263.2,423.9Z" fill="#1c3612"/></g>
<clipPath id="ovg"><polygon points="75,222 99,207 124,210 159.7,223.6 166.5,234.9 148.5,248.3 137.3,255 126,271.5 75,247 99,234.5"/></clipPath>
<g clip-path="url(#ovg)"><rect x="70" y="195" width="135" height="80" fill="#3c641e" filter="url(#gr)"/></g>
<polygon points="75,222 99,207 124,210 159.7,223.6 166.5,234.9 148.5,248.3 137.3,255 126,271.5 75,247 99,234.5" fill="#0a140c" fill-opacity="0.33"/>
<polygon points="124,197.5 199,234.5 124,271.5 75,247 99,234.5 75,222" fill="#3a8cc0" fill-opacity="0.3" stroke="#1d3c50" stroke-opacity="0.5" stroke-width="0.7"/>
<polygon points="124,197.5 199,234.5 124,271.5 75,247 99,234.5 75,222" fill="url(#grid)" opacity="0.6"/>
</svg>
<!-- vscroll -->
<div class="a" style="left:398px;top:70px;width:11px;height:376px;background:#e4e2de"></div>
<div class="a" style="left:398px;top:70px;width:11px;height:11px;background:#f7f6f4;border-bottom:1px solid #d0ccc6"></div>
<svg class="a" style="left:398px;top:70px" width="11" height="11"><path d="M2.5,7 L5.5,4 L8.5,7 Z" fill="#3c3c3c"/></svg>
<div class="a" style="left:398px;top:170px;width:11px;height:201px;background:linear-gradient(90deg,#fbfaf9,#f3f2f0);border-top:1px solid #cfcbc5;border-bottom:1px solid #cfcbc5"></div>
<div class="a" style="left:398px;top:424px;width:11px;height:11px;background:#f7f6f4;border-top:1px solid #d0ccc6"></div>
<svg class="a" style="left:398px;top:424px" width="11" height="11"><path d="M2.5,4 L5.5,7 L8.5,4 Z" fill="#3c3c3c"/></svg>
<!-- hscroll -->
<div class="a" style="left:1px;top:435px;width:397px;height:11px;background:#e4e2de"></div>
<div class="a" style="left:1px;top:435px;width:11px;height:11px;background:#f7f6f4;border-right:1px solid #d0ccc6"></div>
<svg class="a" style="left:1px;top:435px" width="11" height="11"><path d="M7,2.5 L4,5.5 L7,8.5 Z" fill="#3c3c3c"/></svg>
<div class="a" style="left:139px;top:435px;width:121px;height:11px;background:linear-gradient(180deg,#fbfaf9,#f3f2f0);border-left:1px solid #cfcbc5;border-right:1px solid #cfcbc5"></div>
<div class="a" style="left:387px;top:435px;width:11px;height:11px;background:#f7f6f4;border-left:1px solid #d0ccc6"></div>
<svg class="a" style="left:387px;top:435px" width="11" height="11"><path d="M4.5,2.5 L7.5,5.5 L4.5,8.5 Z" fill="#3c3c3c"/></svg>
<div class="a" style="left:398px;top:435px;width:11px;height:11px;background:#e9e7e3"></div>
<!-- status -->
<div class="t" style="left:1px;top:453px;letter-spacing:0.86px">11, 14 [11]</div>
<div class="t" style="left:61px;top:453px;letter-spacing:0.3px">Current layer: Tile Layer 1</div>
<!-- zoom combo -->
<div class="a" style="left:540px;top:449px;width:65px;height:18px;background:#fff;border:1px solid #bfbab2;border-radius:3px"></div>
<div class="a" style="left:589px;top:450px;width:15px;height:16px;background:linear-gradient(#f6f5f3,#e9e7e3);border-left:1px solid #d3cfc8;border-radius:0 2px 2px 0"></div>
<svg class="a" style="left:589px;top:450px" width="15" height="16"><path d="M4,7 L11,7 L7.5,10.5 Z" fill="#444"/></svg>
<div class="t" style="left:544px;top:453px;letter-spacing:0.55px">100 %</div>
<svg class="a" style="left:610px;top:455px" width="14" height="13"><g fill="#c9c5be"><rect x="10" y="2" width="1" height="1"/><rect x="8" y="4.5" width="1" height="1"/><rect x="10" y="4.5" width="1" height="1"/><rect x="6" y="7" width="1" height="1"/><rect x="8" y="7" width="1" height="1"/><rect x="10" y="7" width="1" height="1"/><rect x="4" y="9.5" width="1" height="1"/><rect x="6" y="9.5" width="1" height="1"/><rect x="8" y="9.5" width="1" height="1"/><rect x="10" y="9.5" width="1" height="1"/></g></svg>

<!-- right dock: Objects -->
<div class="t" style="left:418px;top:48px;letter-spacing:0.17px">Objects</div>
<!--DOCKBTN 48-->
<div class="a" style="left:418px;top:64px;width:202px;height:71px;background:#fff;border:1px solid #bdb8b0"></div>
<div class="a" style="left:419px;top:65px;width:200px;height:14px;background:linear-gradient(#f7f6f4,#efedea);border-bottom:1px solid #c9c5be"></div>
<div class="a" style="left:519px;top:65px;width:1px;height:13px;background:#d3cfc9"></div>
<div class="t" style="left:420px;top:67px;letter-spacing:0.6px">Name</div>
<div class="t" style="left:521px;top:67px;letter-spacing:0.2px">Type</div>
<!--OBJICONS-->
<!-- tabs 1 -->
<div class="a" style="left:409px;top:164px;width:215px;height:1px;background:#cfcbc4"></div>
<div class="tab" style="left:414px;top:164px;width:63px;height:17px"></div>
<div class="tab" style="left:531px;top:164px;width:50px;height:17px"></div>
<div class="tsel" style="left:476px;top:163px;width:56px;height:20px"></div>
<svg class="a" style="left:512px;top:184px" width="16" height="3"><g fill="#c9c5be"><rect x="1" y="1" width="1" height="1"/><rect x="3" y="1" width="1" height="1"/><rect x="5" y="1" width="1" height="1"/><rect x="7" y="1" width="1" height="1"/><rect x="9" y="1" width="1" height="1"/><rect x="11" y="1" width="1" height="1"/><rect x="13" y="1" width="1" height="1"/></g></svg>
<div class="t" style="left:423px;top:168px;letter-spacing:0.39px">Mini-map</div>
<div class="t" style="left:486px;top:169px;letter-spacing:0.23px">Objects</div>
<div class="t" style="left:540px;top:168px;letter-spacing:0.3px">Layers</div>
<!-- terrains -->
<div class="t" style="left:417px;top:191px;letter-spacing:0.67px">Terrains</div>
<!--DOCKBTN 191-->
<div class="a" style="left:418px;top:207px;width:202px;height:99px;background:#fff;border:1px solid #bdb8b0"></div>
<div class="a" style="left:419px;top:208px;width:189px;height:25px;background:#f6f5f3"></div>
<div class="a" style="left:419px;top:233px;width:189px;height:49px;background:#318ccb"></div>
<div class="a" style="left:473px;top:233px;width:1px;height:49px;background:#2b7fba"></div>
<div class="t" style="left:421px;top:215px;font-weight:bold;letter-spacing:0.75px">isometric_grass_and_water</div>
<div class="t" style="left:476px;top:253px;color:#dce9f4;letter-spacing:0.3px">Grass</div>
<div class="a" style="left:419px;top:282px;width:189px;height:23px;overflow:hidden"><div class="t" style="left:57px;top:22px;letter-spacing:0.3px">Water</div></div>
<div class="a" style="left:608px;top:208px;width:11px;height:97px;background:#e4e2de"></div>
<div class="a" style="left:608px;top:208px;width:11px;height:10px;background:#f7f6f4;border-bottom:1px solid #d0ccc6"></div>
<svg class="a" style="left:608px;top:208px" width="11" height="10"><path d="M2.5,6.5 L5.5,3.5 L8.5,6.5 Z" fill="#3c3c3c"/></svg>
<div class="a" style="left:608px;top:217px;width:11px;height:60px;background:linear-gradient(90deg,#fbfaf9,#f3f2f0);border-bottom:1px solid #cfcbc5"></div>
<div class="a" style="left:608px;top:294px;width:11px;height:11px;background:#f7f6f4;border-top:1px solid #d0ccc6"></div>
<svg class="a" style="left:608px;top:294px" width="11" height="11"><path d="M2.5,4 L5.5,7 L8.5,4 Z" fill="#3c3c3c"/></svg>
<!-- tabs 2 -->
<div class="a" style="left:409px;top:310px;width:215px;height:1px;background:#cfcbc4"></div>
<div class="tab" style="left:414px;top:310px;width:57px;height:18px"></div>
<div class="tsel" style="left:470px;top:309px;width:59px;height:20px"></div>
<svg class="a" style="left:512px;top:330px" width="16" height="3"><g fill="#c9c5be"><rect x="1" y="1" width="1" height="1"/><rect x="3" y="1" width="1" height="1"/><rect x="5" y="1" width="1" height="1"/><rect x="7" y="1" width="1" height="1"/><rect x="9" y="1" width="1" height="1"/><rect x="11" y="1" width="1" height="1"/><rect x="13" y="1" width="1" height="1"/></g></svg>
<div class="t" style="left:424px;top:314px;letter-spacing:0.34px">Tilesets</div>
<div class="t" style="left:480px;top:315px;letter-spacing:0.57px">Terrains</div>
<!-- properties -->
<div class="t" style="left:417px;top:338px;letter-spacing:0.62px">Properties</div>
<!--DOCKBTN 337-->
<div class="a" style="left:418px;top:353px;width:202px;height:65px;background:#fff;border:1px solid #bdb8b0"></div>
<div class="a" style="left:419px;top:354px;width:200px;height:13px;background:linear-gradient(#f7f6f4,#efedea);border-bottom:1px solid #c9c5be"></div>
<div class="a" style="left:473px;top:354px;width:1px;height:12px;background:#d3cfc9"></div>
<div class="a" style="left:419px;top:367px;width:200px;height:14px;background:#a19f9b"></div>
<div class="a" style="left:419px;top:381px;width:200px;height:14px;background:#f5f4f2"></div>
<div class="a" style="left:473px;top:381px;width:1px;height:14px;background:#e0ddd8"></div>
<div class="a" style="left:419px;top:395px;width:200px;height:14px;background:#a19f9b"></div>
<svg class="a" style="left:419px;top:367px" width="14" height="42"><path d="M3.5,5.5 L10.5,5.5 L7,9.5 Z M3.5,33.5 L10.5,33.5 L7,37.5 Z" fill="#222"/></svg>
<div class="t" style="left:420px;top:357px;letter-spacing:0.61px">Property</div>
<div class="t" style="left:475px;top:357px;letter-spacing:0.55px">Value</div>
<div class="t" style="left:437px;top:371px;color:#e9e8e6;letter-spacing:0.67px">Terrain</div>
<div class="t" style="left:436px;top:385px;letter-spacing:0.6px">Name</div>
<div class="t" style="left:477px;top:385px;letter-spacing:0.3px">Grass</div>
<div class="t" style="left:437px;top:399px;color:#e9e8e6;letter-spacing:0.49px">Custom Properties</div>
<svg class="a" style="left:409px;top:44px" width="215" height="424" viewBox="409 44 215 424">
<defs>
<radialGradient id="glow2"><stop offset="0.4" stop-color="#f1e422"/><stop offset="1" stop-color="#fff6a0" stop-opacity="0"/></radialGradient>
<pattern id="gtex" width="3" height="5" patternUnits="userSpaceOnUse"><rect width="3" height="5" fill="#2f5a1e"/><rect x="1" y="0" width="1" height="3" fill="#4f8a2a"/></pattern>
</defs>
<!-- dock buttons -->
<g fill="none" stroke="#7e7d7a" stroke-width="1">
<rect x="603.5" y="48.5" width="8" height="8" rx="1.5"/><rect x="614.5" y="48.5" width="8" height="8" rx="1.5"/>
<rect x="603.5" y="191.5" width="8" height="8" rx="1.5"/><rect x="614.5" y="191.5" width="8" height="8" rx="1.5"/>
<rect x="603.5" y="338.5" width="8" height="8" rx="1.5"/><rect x="614.5" y="338.5" width="8" height="8" rx="1.5"/>
</g>
<g stroke="#5a5a58" stroke-width="1.2" fill="none">
<path d="M616.5,50.5 L620.5,54.5 M620.5,50.5 L616.5,54.5"/>
<path d="M616.5,193.5 L620.5,197.5 M620.5,193.5 L616.5,197.5"/>
<path d="M616.5,340.5 L620.5,344.5 M620.5,340.5 L616.5,344.5"/>
</g>
<g stroke="#7e7d7a" stroke-width="0.9" fill="none">
<path d="M605.5,54 L605.5,55 L609,55 Q610,55 610,53.5 Q610,51 607.5,51 M606,53 L608,51"/>
<path d="M605.5,197 L605.5,198 L609,198 Q610,198 610,196.5 Q610,194 607.5,194 M606,196 L608,194"/>
<path d="M605.5,344 L605.5,345 L609,345 Q610,345 610,343.5 Q610,341 607.5,341 M606,343 L608,341"/>
</g>
<!-- objects toolbar icons -->
<rect x="425.8" y="140.5" width="9.5" height="11.7" fill="#ececea" stroke="#a9a9a5" stroke-width="0.9"/>
<circle cx="432.5" cy="143" r="3.8" fill="url(#glow2)"/>
<path d="M432.5,140.8 L433.2,142.3 L434.8,142.4 L433.6,143.4 L434,145 L432.5,144.2 L431,145 L431.4,143.4 L430.2,142.4 L431.8,142.3 Z" fill="#fff"/>
<rect x="447" y="143.5" width="9" height="8.5" fill="#e2e2e0" stroke="#a8a8a5" stroke-width="0.9"/>
<rect x="444.5" y="141" width="9" height="8.5" fill="#dcdcda" stroke="#9c9c99" stroke-width="0.9"/>
<rect x="446" y="142.8" width="6" height="2" fill="#777"/><rect x="446" y="145.5" width="6" height="2" fill="#aaa"/>
<path d="M464.5,144 L474.5,144 L473.5,151 Q469.5,153 465.5,151 Z" fill="#d3d3d0" stroke="#7a7a77" stroke-width="0.9"/>
<ellipse cx="469.5" cy="143.5" rx="5.3" ry="2.5" fill="#e9e9e7" stroke="#7a7a77" stroke-width="0.9"/>
<ellipse cx="469.5" cy="143.3" rx="2" ry="1" fill="#777"/>
<path d="M467,146 L467,151 M469.5,146 L469.5,151.5 M472,146 L472,151" stroke="#8e8e8b" stroke-width="0.8"/>
<circle cx="488" cy="143.5" r="3.2" fill="#cfcfcc" stroke="#9b9b98" stroke-width="0.9"/>
<rect x="483" y="145.5" width="12.5" height="6.5" rx="2.5" fill="#d6d6d3" stroke="#9b9b98" stroke-width="0.9"/>
<path d="M504,141 L511,141 L513.5,143.5 L513.5,152 L504,152 Z" fill="#f3f3f1" stroke="#cfcfcc" stroke-width="0.9"/>
<path d="M507,149 Q506,145 509,145 Q512,146 510,149 L513,152" stroke="#c9c9c6" stroke-width="0.9" fill="none"/>
<!-- grass terrain icon -->
<filter id="gi" x="0" y="0" width="100%" height="100%" color-interpolation-filters="sRGB">
<feTurbulence type="fractalNoise" baseFrequency="0.9 0.25" numOctaves="2" seed="4" result="n"/>
<feColorMatrix in="n" type="matrix" values="0.45 0 0 0 -0.02  0.8 0 0 0 -0.03  0.3 0 0 0 -0.03  0 0 0 0 1" result="c"/>
<feComposite in="c" in2="SourceAlpha" operator="in"/>
</filter>
<path d="M421,257 L446,269.5 L471.2,256.5 L471.2,258.5 L446,271.2 L421,259 Z" fill="#3a3d3e"/>
<path d="M421.0,257.0 L422.0,253.5 L422.9,256.0 L423.9,251.5 L424.8,255.1 L425.8,250.6 L426.8,254.1 L427.7,248.7 L428.7,253.2 L429.7,247.4 L430.6,252.2 L431.6,247.4 L432.5,251.2 L433.5,246.2 L434.5,250.3 L435.4,243.2 L436.4,249.3 L437.3,243.3 L438.3,248.3 L439.3,242.2 L440.2,247.4 L441.2,239.4 L442.2,246.4 L443.1,239.5 L444.1,245.5 L445.0,237.7 L446.0,244.5 L447.0,238.4 L447.9,245.4 L448.9,239.0 L449.9,246.3 L450.8,241.1 L451.8,247.3 L452.8,241.0 L453.8,248.2 L454.7,241.6 L455.7,249.1 L456.7,243.5 L457.6,250.0 L458.6,244.1 L459.6,251.0 L460.5,245.5 L461.5,251.9 L462.5,248.0 L463.4,252.8 L464.4,247.7 L465.4,253.7 L466.4,249.3 L467.3,254.7 L468.3,251.2 L469.3,255.6 L470.2,253.1 L471.2,256.5 L446,269.5 Z" fill="#2c5a22" filter="url(#gi)"/>
<!-- water terrain icon (partial) -->
<path d="M433.5,305 L446,298.6 L458.5,305 Z" fill="#1d2c30"/>

<!-- plus minus -->
<path d="M429.2,426.5 L432,426.5 L432,429 L434.7,429 L434.7,431.8 L432,431.8 L432,434.5 L429.2,434.5 L429.2,431.8 L426.5,431.8 L426.5,429 L429.2,429 Z" fill="#4f82c8" stroke="#2f5d9e" stroke-width="0.8"/>
<rect x="445" y="429" width="10" height="3" rx="1.5" fill="#a3a29f" stroke="#8c8b88" stroke-width="0.5"/>
</svg>

</body></html>
